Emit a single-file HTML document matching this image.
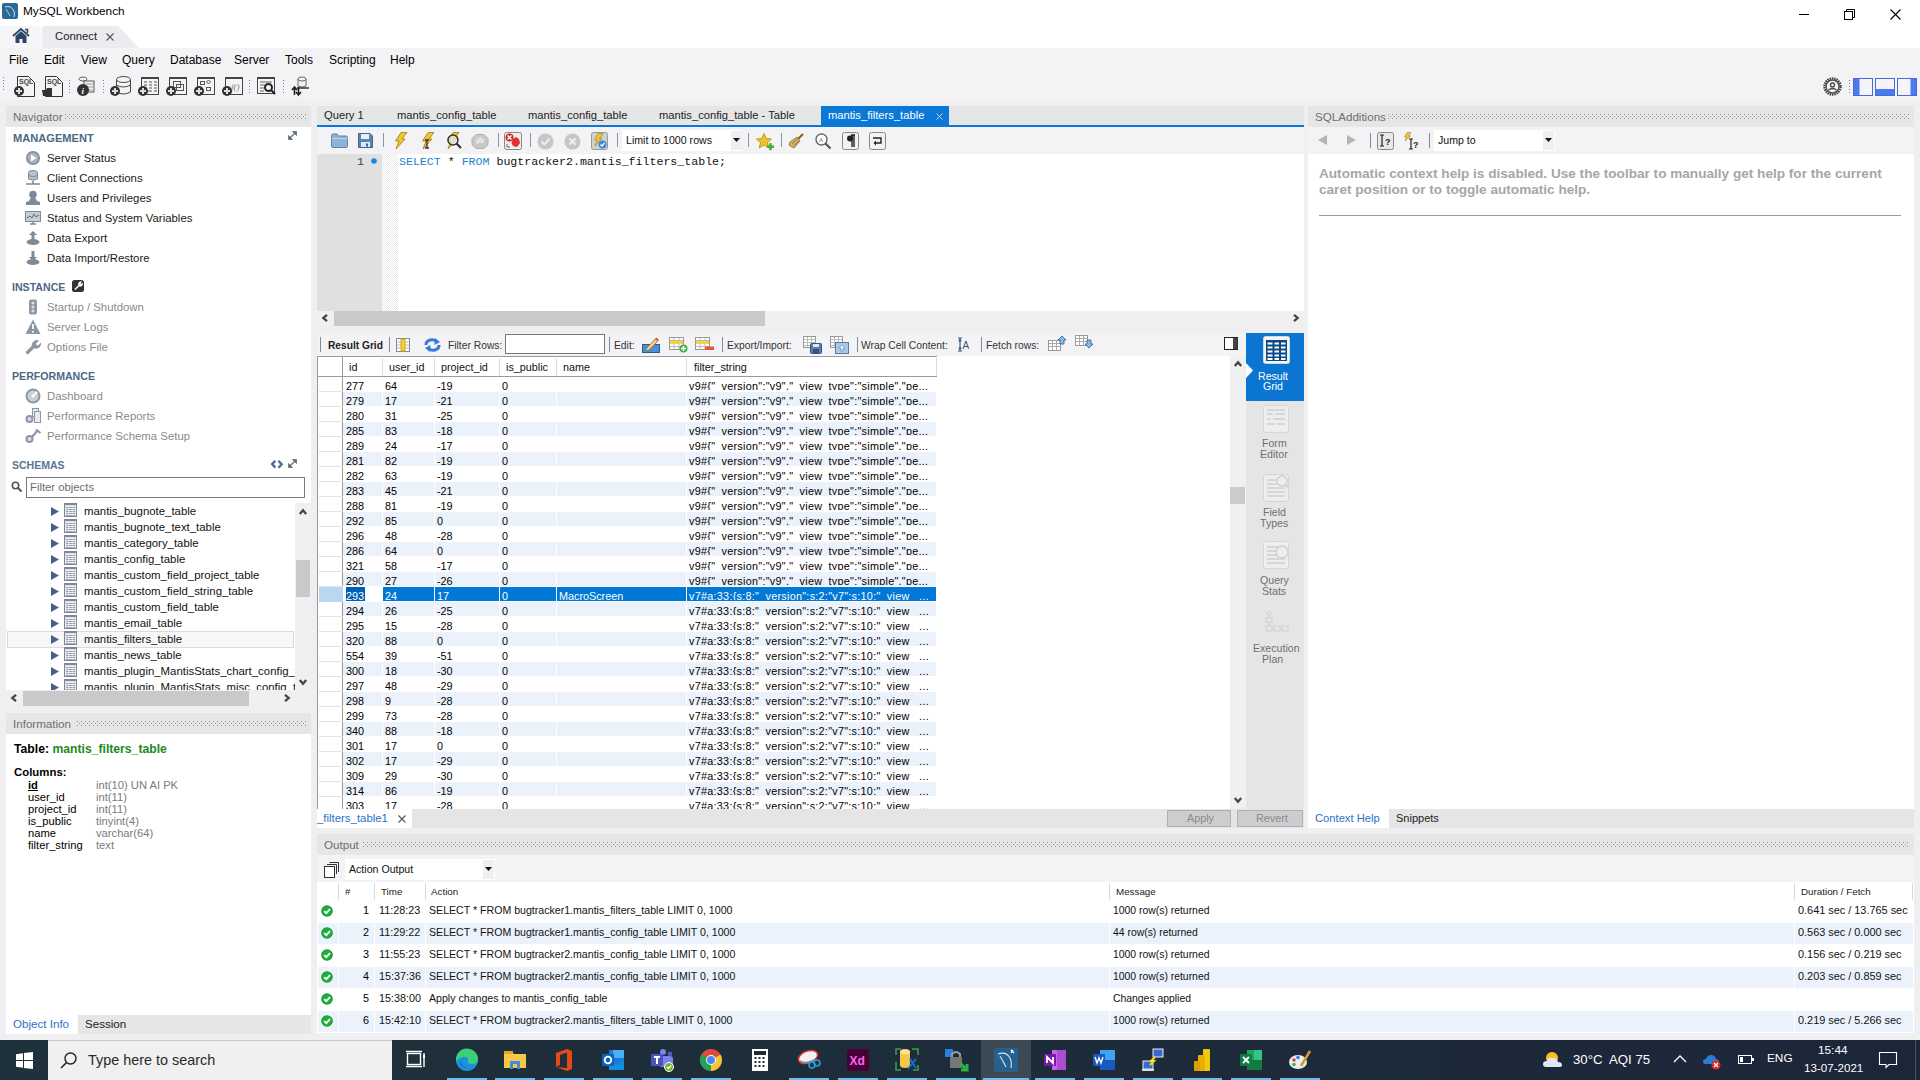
<!DOCTYPE html><html><head><meta charset="utf-8"><style>
*{margin:0;padding:0;box-sizing:border-box}
html,body{width:1920px;height:1080px;overflow:hidden;background:#efeff1;font-family:"Liberation Sans",sans-serif;color:#000;position:relative}
.a{position:absolute}
.t{position:absolute;white-space:nowrap;line-height:1}
.dots{position:absolute;background-image:radial-gradient(circle,#b8b8bc 0.8px,transparent 1px);background-size:4px 4px;}
svg{position:absolute;overflow:visible}
</style></head><body><svg width="0" height="0" style="position:absolute"><defs><pattern id="dp" width="4" height="4" patternUnits="userSpaceOnUse"><rect x="0" y="0" width="1" height="1" fill="#949494"/><rect x="2" y="2" width="1" height="1" fill="#949494"/></pattern><pattern id="hatch" width="2" height="2" patternUnits="userSpaceOnUse"><rect x="0" y="0" width="1" height="1" fill="#ebebeb"/><rect x="1" y="1" width="1" height="1" fill="#ebebeb"/></pattern></defs></svg>
<div class="a" style="left:0px;top:0px;width:1920px;height:25px;background:#fff"></div>
<svg style="left:2px;top:3px" width="16" height="16" viewBox="0 0 16 16"><rect x="0" y="0" width="16" height="16" rx="2" fill="#2a6a94"/><path d="M3 4 Q9 2 12 8 Q13 11 12 14" stroke="#cfe0ee" stroke-width="1" fill="none"/><path d="M4 6 Q6 9 8 13" stroke="#cfe0ee" stroke-width="0.8" fill="none"/></svg>
<div class="t" style="left:23px;top:6px;font-size:11.8px;color:#000;">MySQL Workbench</div>
<div class="a" style="left:1799px;top:14px;width:10px;height:1px;background:#000"></div>
<svg style="left:1844px;top:9px" width="11" height="11" viewBox="0 0 11 11"><rect x="0.5" y="2.5" width="8" height="8" fill="none" stroke="#000"/><path d="M2.5 2.5V0.5H10.5V8.5H8.5" fill="none" stroke="#000"/></svg>
<svg style="left:1890px;top:9px" width="11" height="11" viewBox="0 0 11 11"><path d="M0.5 0.5L10.5 10.5M10.5 0.5L0.5 10.5" stroke="#000" stroke-width="1.1"/></svg>
<div class="a" style="left:0px;top:25px;width:1920px;height:23px;background:#fff"></div>
<div class="a" style="left:0px;top:26px;width:41px;height:22px;background:#f6f6f8;border-top-right-radius:5px"></div>
<svg style="left:12px;top:28px" width="18" height="16" viewBox="0 0 18 16"><path d="M1 8L9 1L17 8" stroke="#2e4468" stroke-width="1.8" fill="none"/><path d="M3.5 8L9 3.3L14.5 8V15H10.5V11H7.5V15H3.5Z" fill="#2e4468"/><path d="M13 1.5H15.5V5" stroke="#2e4468" stroke-width="1.5" fill="none"/></svg>
<svg style="left:42px;top:26px" width="98" height="22" viewBox="0 0 98 22"><path d="M0 22 L0 3 Q0 0 3 0 L76 0 L97 22 Z" fill="#ececf0"/></svg>
<div class="t" style="left:55px;top:31px;font-size:11.3px;color:#222;">Connect</div>
<svg style="left:106px;top:33px" width="8" height="8" viewBox="0 0 8 8"><path d="M0.5 0.5L7.5 7.5M7.5 0.5L0.5 7.5" stroke="#555" stroke-width="1.1"/></svg>
<div class="a" style="left:0px;top:48px;width:1920px;height:52px;background:#f3f3f5"></div>
<div class="t" style="left:9px;top:54px;font-size:12px;color:#000;">File</div>
<div class="t" style="left:44px;top:54px;font-size:12px;color:#000;">Edit</div>
<div class="t" style="left:81px;top:54px;font-size:12px;color:#000;">View</div>
<div class="t" style="left:122px;top:54px;font-size:12px;color:#000;">Query</div>
<div class="t" style="left:170px;top:54px;font-size:12px;color:#000;">Database</div>
<div class="t" style="left:234px;top:54px;font-size:12px;color:#000;">Server</div>
<div class="t" style="left:285px;top:54px;font-size:12px;color:#000;">Tools</div>
<div class="t" style="left:329px;top:54px;font-size:12px;color:#000;">Scripting</div>
<div class="t" style="left:390px;top:54px;font-size:12px;color:#000;">Help</div>
<div class="a" style="left:3px;top:77px;width:1px;height:14px;background-image:linear-gradient(to bottom,#6a88b8 50%,transparent 50%);background-size:1px 3px"></div>
<svg style="left:14px;top:76px" width="21" height="21" viewBox="0 0 21 21"><path d="M3.5 0.5H14.5L20.5 6.5V20.5H3.5Z" fill="#f4f4f4" stroke="#333"/><text x="5" y="8" font-size="7" font-weight="bold" fill="#444" font-family="Liberation Sans">SQL</text><circle cx="5" cy="15" r="5" fill="#333"/><path d="M2 15H8M5 12V18" stroke="#ddd" stroke-width="2"/></svg>
<svg style="left:42px;top:76px" width="21" height="21" viewBox="0 0 21 21"><path d="M3.5 0.5H14.5L20.5 6.5V20.5H3.5Z" fill="#f4f4f4" stroke="#333"/><text x="5" y="8" font-size="7" font-weight="bold" fill="#444" font-family="Liberation Sans">SQL</text><path d="M0 14H4L5 12H10V20H1Z" fill="#333"/></svg>
<div class="a" style="left:69px;top:80px;width:1px;height:14px;background-image:linear-gradient(to bottom,#6a88b8 50%,transparent 50%);background-size:1px 3px"></div>
<svg style="left:77px;top:76px" width="18" height="21" viewBox="0 0 18 21"><ellipse cx="6" cy="3" rx="4" ry="2" fill="none" stroke="#666"/><rect x="7" y="5" width="10" height="11" fill="#f4f4f4" stroke="#555"/><path d="M9 8H16M9 11H16M9 14H16" stroke="#999"/><circle cx="6" cy="14" r="6" fill="#333"/><text x="4.5" y="18" font-size="9" font-style="italic" font-weight="bold" fill="#fff" font-family="Liberation Serif">i</text></svg>
<div class="a" style="left:103px;top:80px;width:1px;height:14px;background-image:linear-gradient(to bottom,#6a88b8 50%,transparent 50%);background-size:1px 3px"></div>
<svg style="left:110px;top:76px" width="21" height="21" viewBox="0 0 21 21"><path d="M6.5 3V16Q13 20 20.5 16V3" fill="#f4f4f4" stroke="#444"/><ellipse cx="13.5" cy="3.5" rx="7" ry="3" fill="#f4f4f4" stroke="#444"/><path d="M6.5 9Q13 13 20.5 9" fill="none" stroke="#444"/><circle cx="5" cy="15" r="5" fill="#333"/><path d="M2 15H8M5 12V18" stroke="#ddd" stroke-width="2"/></svg>
<svg style="left:138px;top:76px" width="21" height="21" viewBox="0 0 21 21"><rect x="3.5" y="1.5" width="17" height="17" fill="#f4f4f4" stroke="#444"/><rect x="3" y="1" width="18" height="2" fill="#444"/><path d="M6 6H9M11 6H14M16 6H19M6 9H9M11 9H14M16 9H19M6 12H9M11 12H14M16 12H19M9 15H14M16 15H19" stroke="#555" stroke-width="1"/><circle cx="5" cy="15" r="5" fill="#333"/><path d="M2 15H8M5 12V18" stroke="#ddd" stroke-width="2"/></svg>
<svg style="left:166px;top:76px" width="21" height="21" viewBox="0 0 21 21"><rect x="3.5" y="1.5" width="17" height="17" fill="#f4f4f4" stroke="#444"/><rect x="3" y="1" width="18" height="2" fill="#444"/><rect x="7.5" y="5.5" width="7" height="6" fill="none" stroke="#555"/><rect x="10.5" y="8.5" width="7" height="6" fill="none" stroke="#555"/><circle cx="5" cy="15" r="5" fill="#333"/><path d="M2 15H8M5 12V18" stroke="#ddd" stroke-width="2"/></svg>
<svg style="left:194px;top:76px" width="21" height="21" viewBox="0 0 21 21"><rect x="3.5" y="1.5" width="17" height="17" fill="#f4f4f4" stroke="#444"/><rect x="3" y="1" width="18" height="2" fill="#444"/><rect x="6.5" y="5.5" width="4" height="3" fill="none" stroke="#555"/><rect x="12.5" y="11.5" width="4" height="3" fill="none" stroke="#555"/><path d="M14.5 4L16.5 6L14.5 8L12.5 6Z" fill="none" stroke="#555"/><circle cx="5" cy="15" r="5" fill="#333"/><path d="M2 15H8M5 12V18" stroke="#ddd" stroke-width="2"/></svg>
<svg style="left:222px;top:76px" width="21" height="21" viewBox="0 0 21 21"><rect x="3.5" y="1.5" width="17" height="17" fill="#f4f4f4" stroke="#444"/><rect x="3" y="1" width="18" height="2" fill="#444"/><text x="9" y="14" font-size="9" fill="#777" font-family="Liberation Serif" font-style="italic">f()</text><circle cx="5" cy="15" r="5" fill="#333"/><path d="M2 15H8M5 12V18" stroke="#ddd" stroke-width="2"/></svg>
<div class="a" style="left:249px;top:80px;width:1px;height:14px;background-image:linear-gradient(to bottom,#6a88b8 50%,transparent 50%);background-size:1px 3px"></div>
<svg style="left:257px;top:76px" width="20" height="21" viewBox="0 0 20 21"><rect x="0.5" y="1.5" width="17" height="16" fill="#f4f4f4" stroke="#444"/><rect x="0" y="1" width="18" height="2" fill="#444"/><path d="M3 6H15M3 9H8M3 12H7M3 15H7" stroke="#666"/><circle cx="11.5" cy="11.5" r="3.5" fill="none" stroke="#222" stroke-width="2"/><path d="M14 14L18 18" stroke="#222" stroke-width="2"/></svg>
<div class="a" style="left:283px;top:80px;width:1px;height:14px;background-image:linear-gradient(to bottom,#6a88b8 50%,transparent 50%);background-size:1px 3px"></div>
<svg style="left:290px;top:76px" width="20" height="21" viewBox="0 0 20 21"><ellipse cx="12" cy="3" rx="4" ry="2" fill="#f4f4f4" stroke="#666"/><path d="M8 3V10Q12 12 16 10V3" fill="none" stroke="#666"/><path d="M7 12H19" stroke="#333" stroke-width="1.5"/><path d="M2 14L4.5 11L7 14M4.5 11V19M6 16L8.5 19L11 16M8.5 11V19" stroke="#222" stroke-width="1.6" fill="none"/></svg>
<svg style="left:1823px;top:77px" width="19" height="19" viewBox="0 0 19 19"><circle cx="9.5" cy="9.5" r="8" fill="none" stroke="#444" stroke-width="2.5" stroke-dasharray="1.5 0.8"/><circle cx="9.5" cy="9.5" r="6.5" fill="none" stroke="#555" stroke-width="1.5"/><circle cx="9.5" cy="8" r="2" fill="none" stroke="#444" stroke-width="1.3"/><path d="M5.5 13Q9.5 10 13.5 13" stroke="#444" stroke-width="1.3" fill="none"/></svg>
<div class="a" style="left:1849px;top:80px;width:1px;height:14px;background-image:linear-gradient(to bottom,#6a88b8 50%,transparent 50%);background-size:1px 3px"></div>
<svg style="left:1853px;top:78px" width="64" height="18" viewBox="0 0 64 18"><rect x="0.5" y="0.5" width="19" height="17" fill="#f4f4f8" stroke="#4a6ad8"/><rect x="1" y="1" width="5.5" height="16" fill="#4a7af0"/><rect x="22.5" y="0.5" width="19" height="17" fill="#f4f4f8" stroke="#4a6ad8"/><rect x="23" y="11" width="18" height="6" fill="#4a7af0"/><rect x="44.5" y="0.5" width="19" height="17" fill="#f4f4f8" stroke="#4a6ad8"/><rect x="57.5" y="1" width="5.5" height="16" fill="#4a7af0"/></svg>
<div class="a" style="left:6px;top:106px;width:305px;height:21px;background:#e6e6e7"></div>
<div class="t" style="left:13px;top:111px;font-size:11.6px;color:#6e6e6e;">Navigator</div>
<svg style="left:65px;top:114px" width="241" height="5" viewBox="0 0 241 5"><rect x="0" y="0" width="241" height="5" fill="url(#dp)"/></svg>
<div class="a" style="left:6px;top:127px;width:305px;height:563px;background:#fff"></div>
<div class="t" style="left:13px;top:133px;font-size:11.1px;color:#4e6786;font-weight:bold">MANAGEMENT</div>
<svg style="left:288px;top:131px" width="10" height="10" viewBox="0 0 10 10"><path d="M4.5 0.5H8.5V4.5Z M0.5 4.5V8.5H4.5Z" fill="#5e6e7e" stroke="#5e6e7e" stroke-width="0.8" stroke-linejoin="round"/><path d="M2 7L7 2" stroke="#5e6e7e" stroke-width="1.3"/></svg>
<svg style="left:25px;top:150px" width="16" height="16" viewBox="0 0 16 16"><circle cx="8" cy="8" r="7" fill="#7d8a98"/><circle cx="8" cy="8" r="5.5" fill="#a9b3bd"/><path d="M6 4.5L11.5 8L6 11.5Z" fill="#fff"/></svg>
<div class="t" style="left:47px;top:153px;font-size:11.4px;color:#1a1a1a;">Server Status</div>
<svg style="left:25px;top:170px" width="16" height="16" viewBox="0 0 16 16"><ellipse cx="8" cy="2.5" rx="4.5" ry="2" fill="#b9c2cb" stroke="#7d8a98"/><path d="M3.5 2.5V9Q8 11.5 12.5 9V2.5" fill="#b9c2cb" stroke="#7d8a98"/><path d="M3.5 5.5Q8 8 12.5 5.5" stroke="#7d8a98" fill="none"/><path d="M8 11V14M1 14H15" stroke="#7d8a98" stroke-width="1.5"/></svg>
<div class="t" style="left:47px;top:173px;font-size:11.4px;color:#1a1a1a;">Client Connections</div>
<svg style="left:25px;top:190px" width="16" height="16" viewBox="0 0 16 16"><circle cx="8" cy="4.5" r="3.8" fill="#7d8a98"/><path d="M5.5 8L4 11L1 12V15H15V12L12 11L10.5 8Z" fill="#7d8a98"/></svg>
<div class="t" style="left:47px;top:193px;font-size:11.4px;color:#1a1a1a;">Users and Privileges</div>
<svg style="left:25px;top:210px" width="16" height="16" viewBox="0 0 16 16"><rect x="0.5" y="1.5" width="15" height="10" fill="#c6ced6" stroke="#7d8a98"/><path d="M2 8L5 6L7 8L9 4L11 7L14 5" stroke="#5a6a7a" fill="none"/><path d="M5 14H11M8 12V14" stroke="#7d8a98" stroke-width="1.5"/></svg>
<div class="t" style="left:47px;top:213px;font-size:11.4px;color:#1a1a1a;">Status and System Variables</div>
<svg style="left:25px;top:230px" width="16" height="16" viewBox="0 0 16 16"><ellipse cx="8" cy="12" rx="6.5" ry="3" fill="#7d8a98"/><path d="M8 1L4 5H6.5V10H9.5V5H12Z" fill="#7d8a98"/></svg>
<div class="t" style="left:47px;top:233px;font-size:11.4px;color:#1a1a1a;">Data Export</div>
<svg style="left:25px;top:250px" width="16" height="16" viewBox="0 0 16 16"><ellipse cx="8" cy="12" rx="6.5" ry="3" fill="#7d8a98"/><path d="M8 11L4 7H6.5V1H9.5V7H12Z" fill="#7d8a98"/></svg>
<div class="t" style="left:47px;top:253px;font-size:11.4px;color:#1a1a1a;">Data Import/Restore</div>
<div class="t" style="left:12px;top:282px;font-size:10.6px;color:#4e6786;font-weight:bold">INSTANCE</div>
<svg style="left:72px;top:280px" width="12" height="12" viewBox="0 0 12 12"><rect x="0" y="0" width="12" height="12" rx="2.5" fill="#333"/><path d="M3 9.5L7 5.5M7 5.5Q6.5 3 8.5 2.3L7.8 3.8L8.8 4.8L10.2 4Q10 6.3 7 5.5" stroke="#fff" stroke-width="1.5" fill="#fff"/></svg>
<svg style="left:25px;top:299px" width="16" height="16" viewBox="0 0 16 16"><rect x="4" y="0.5" width="8" height="15" rx="2" fill="#8c97a3"/><circle cx="8" cy="4" r="1.6" fill="#d8dde2"/><circle cx="8" cy="8" r="1.6" fill="#d8dde2"/><circle cx="8" cy="12" r="1.6" fill="#d8dde2"/></svg>
<div class="t" style="left:47px;top:302px;font-size:11.4px;color:#8a8a8a;">Startup / Shutdown</div>
<svg style="left:25px;top:319px" width="16" height="16" viewBox="0 0 16 16"><path d="M8 0.5L15.5 15H0.5Z" fill="#8c97a3"/><path d="M8 5V10M8 12V13.5" stroke="#fff" stroke-width="1.8"/></svg>
<div class="t" style="left:47px;top:322px;font-size:11.4px;color:#8a8a8a;">Server Logs</div>
<svg style="left:25px;top:339px" width="16" height="16" viewBox="0 0 16 16"><path d="M2.5 13.5L8.5 7.5" stroke="#8c97a3" stroke-width="3.2" stroke-linecap="round"/><path d="M7 8Q6 4 9 2Q11.5 0.5 14 1.5L11 4.5L11.5 6L13 6.5L16 3.5Q16.5 6.5 14.5 8.5Q12 10.5 8.5 9Z" fill="#8c97a3"/></svg>
<div class="t" style="left:47px;top:342px;font-size:11.4px;color:#8a8a8a;">Options File</div>
<div class="t" style="left:12px;top:371px;font-size:10.6px;color:#4e6786;font-weight:bold">PERFORMANCE</div>
<svg style="left:25px;top:388px" width="16" height="16" viewBox="0 0 16 16"><circle cx="8" cy="8" r="7.5" fill="#8c97a3"/><circle cx="8" cy="8" r="5.5" fill="#c9d0d6"/><path d="M8 8L12 4" stroke="#fff" stroke-width="2"/><circle cx="8" cy="8" r="1.5" fill="#fff"/></svg>
<div class="t" style="left:47px;top:391px;font-size:11.4px;color:#8a8a8a;">Dashboard</div>
<svg style="left:25px;top:408px" width="16" height="16" viewBox="0 0 16 16"><rect x="7.5" y="0.5" width="6" height="8" fill="#e8ebee" stroke="#8c97a3"/><rect x="9.5" y="3.5" width="6" height="11" fill="#e8ebee" stroke="#8c97a3"/><circle cx="4.5" cy="11" r="4" fill="#8c97a3"/><circle cx="4.5" cy="11" r="2" fill="#dde"/></svg>
<div class="t" style="left:47px;top:411px;font-size:11.4px;color:#8a8a8a;">Performance Reports</div>
<svg style="left:25px;top:428px" width="16" height="16" viewBox="0 0 16 16"><path d="M7 9L13 2M11 1.5L15.5 5" stroke="#8c97a3" stroke-width="2.2"/><circle cx="4.5" cy="11" r="4" fill="#8c97a3"/><circle cx="4.5" cy="11" r="2" fill="#dde"/></svg>
<div class="t" style="left:47px;top:431px;font-size:11.4px;color:#8a8a8a;">Performance Schema Setup</div>
<div class="t" style="left:12px;top:460px;font-size:10.5px;color:#5b7592;font-weight:bold">SCHEMAS</div>
<svg style="left:271px;top:460px" width="12" height="9" viewBox="0 0 12 9"><path d="M4.3 0.8L1.2 4L4.3 7.6" stroke="#4d6c92" stroke-width="2.4" fill="none"/><path d="M7.4 0.8L10.6 4.2L7.6 7.8" stroke="#4d6c92" stroke-width="2.4" fill="none"/></svg>
<svg style="left:288px;top:459px" width="10" height="10" viewBox="0 0 10 10"><path d="M4.5 0.5H8.5V4.5Z M0.5 4.5V8.5H4.5Z" fill="#5e6e7e" stroke="#5e6e7e" stroke-width="0.8" stroke-linejoin="round"/><path d="M2 7L7 2" stroke="#5e6e7e" stroke-width="1.3"/></svg>
<svg style="left:11px;top:481px" width="12" height="12" viewBox="0 0 12 12"><circle cx="4.5" cy="4.5" r="3.2" fill="none" stroke="#555" stroke-width="1.6"/><path d="M7 7L10.5 10.5" stroke="#555" stroke-width="2"/></svg>
<div class="a" style="left:26px;top:477px;width:279px;height:21px;background:#fff;border:1px solid #7a7a7a"></div>
<div class="t" style="left:30px;top:482px;font-size:11.3px;color:#6d6d6d;">Filter objects</div>
<div class="a" style="left:6px;top:503px;width:289px;height:187px;overflow:hidden">
<div class="a" style="left:1px;top:128px;width:287px;height:17px;background:#f7f7f7;border:1px solid #dadada"></div>
<svg style="left:45px;top:4px" width="8" height="9" viewBox="0 0 8 9"><path d="M0 0L8 4.5L0 9Z" fill="#44618a"/></svg>
<svg style="left:58px;top:0px" width="13" height="14" viewBox="0 0 13 14"><rect x="0.5" y="0.5" width="12" height="13" fill="#e6e9ed" stroke="#7c8694"/><rect x="0" y="0" width="13" height="2" fill="#7c8694"/><path d="M2 4.5H11M2 6.5H11M2 8.5H11M2 10.5H11M2 12.5H11" stroke="#8e97a2" stroke-width="0.9" stroke-dasharray="2.5 0.8"/></svg>
<div class="t" style="left:78px;top:3px;font-size:11.4px;color:#111;">mantis_bugnote_table</div>
<svg style="left:45px;top:20px" width="8" height="9" viewBox="0 0 8 9"><path d="M0 0L8 4.5L0 9Z" fill="#44618a"/></svg>
<svg style="left:58px;top:16px" width="13" height="14" viewBox="0 0 13 14"><rect x="0.5" y="0.5" width="12" height="13" fill="#e6e9ed" stroke="#7c8694"/><rect x="0" y="0" width="13" height="2" fill="#7c8694"/><path d="M2 4.5H11M2 6.5H11M2 8.5H11M2 10.5H11M2 12.5H11" stroke="#8e97a2" stroke-width="0.9" stroke-dasharray="2.5 0.8"/></svg>
<div class="t" style="left:78px;top:19px;font-size:11.4px;color:#111;">mantis_bugnote_text_table</div>
<svg style="left:45px;top:36px" width="8" height="9" viewBox="0 0 8 9"><path d="M0 0L8 4.5L0 9Z" fill="#44618a"/></svg>
<svg style="left:58px;top:32px" width="13" height="14" viewBox="0 0 13 14"><rect x="0.5" y="0.5" width="12" height="13" fill="#e6e9ed" stroke="#7c8694"/><rect x="0" y="0" width="13" height="2" fill="#7c8694"/><path d="M2 4.5H11M2 6.5H11M2 8.5H11M2 10.5H11M2 12.5H11" stroke="#8e97a2" stroke-width="0.9" stroke-dasharray="2.5 0.8"/></svg>
<div class="t" style="left:78px;top:35px;font-size:11.4px;color:#111;">mantis_category_table</div>
<svg style="left:45px;top:52px" width="8" height="9" viewBox="0 0 8 9"><path d="M0 0L8 4.5L0 9Z" fill="#44618a"/></svg>
<svg style="left:58px;top:48px" width="13" height="14" viewBox="0 0 13 14"><rect x="0.5" y="0.5" width="12" height="13" fill="#e6e9ed" stroke="#7c8694"/><rect x="0" y="0" width="13" height="2" fill="#7c8694"/><path d="M2 4.5H11M2 6.5H11M2 8.5H11M2 10.5H11M2 12.5H11" stroke="#8e97a2" stroke-width="0.9" stroke-dasharray="2.5 0.8"/></svg>
<div class="t" style="left:78px;top:51px;font-size:11.4px;color:#111;">mantis_config_table</div>
<svg style="left:45px;top:68px" width="8" height="9" viewBox="0 0 8 9"><path d="M0 0L8 4.5L0 9Z" fill="#44618a"/></svg>
<svg style="left:58px;top:64px" width="13" height="14" viewBox="0 0 13 14"><rect x="0.5" y="0.5" width="12" height="13" fill="#e6e9ed" stroke="#7c8694"/><rect x="0" y="0" width="13" height="2" fill="#7c8694"/><path d="M2 4.5H11M2 6.5H11M2 8.5H11M2 10.5H11M2 12.5H11" stroke="#8e97a2" stroke-width="0.9" stroke-dasharray="2.5 0.8"/></svg>
<div class="t" style="left:78px;top:67px;font-size:11.4px;color:#111;">mantis_custom_field_project_table</div>
<svg style="left:45px;top:84px" width="8" height="9" viewBox="0 0 8 9"><path d="M0 0L8 4.5L0 9Z" fill="#44618a"/></svg>
<svg style="left:58px;top:80px" width="13" height="14" viewBox="0 0 13 14"><rect x="0.5" y="0.5" width="12" height="13" fill="#e6e9ed" stroke="#7c8694"/><rect x="0" y="0" width="13" height="2" fill="#7c8694"/><path d="M2 4.5H11M2 6.5H11M2 8.5H11M2 10.5H11M2 12.5H11" stroke="#8e97a2" stroke-width="0.9" stroke-dasharray="2.5 0.8"/></svg>
<div class="t" style="left:78px;top:83px;font-size:11.4px;color:#111;">mantis_custom_field_string_table</div>
<svg style="left:45px;top:100px" width="8" height="9" viewBox="0 0 8 9"><path d="M0 0L8 4.5L0 9Z" fill="#44618a"/></svg>
<svg style="left:58px;top:96px" width="13" height="14" viewBox="0 0 13 14"><rect x="0.5" y="0.5" width="12" height="13" fill="#e6e9ed" stroke="#7c8694"/><rect x="0" y="0" width="13" height="2" fill="#7c8694"/><path d="M2 4.5H11M2 6.5H11M2 8.5H11M2 10.5H11M2 12.5H11" stroke="#8e97a2" stroke-width="0.9" stroke-dasharray="2.5 0.8"/></svg>
<div class="t" style="left:78px;top:99px;font-size:11.4px;color:#111;">mantis_custom_field_table</div>
<svg style="left:45px;top:116px" width="8" height="9" viewBox="0 0 8 9"><path d="M0 0L8 4.5L0 9Z" fill="#44618a"/></svg>
<svg style="left:58px;top:112px" width="13" height="14" viewBox="0 0 13 14"><rect x="0.5" y="0.5" width="12" height="13" fill="#e6e9ed" stroke="#7c8694"/><rect x="0" y="0" width="13" height="2" fill="#7c8694"/><path d="M2 4.5H11M2 6.5H11M2 8.5H11M2 10.5H11M2 12.5H11" stroke="#8e97a2" stroke-width="0.9" stroke-dasharray="2.5 0.8"/></svg>
<div class="t" style="left:78px;top:115px;font-size:11.4px;color:#111;">mantis_email_table</div>
<svg style="left:45px;top:132px" width="8" height="9" viewBox="0 0 8 9"><path d="M0 0L8 4.5L0 9Z" fill="#44618a"/></svg>
<svg style="left:58px;top:128px" width="13" height="14" viewBox="0 0 13 14"><rect x="0.5" y="0.5" width="12" height="13" fill="#e6e9ed" stroke="#7c8694"/><rect x="0" y="0" width="13" height="2" fill="#7c8694"/><path d="M2 4.5H11M2 6.5H11M2 8.5H11M2 10.5H11M2 12.5H11" stroke="#8e97a2" stroke-width="0.9" stroke-dasharray="2.5 0.8"/></svg>
<div class="t" style="left:78px;top:131px;font-size:11.4px;color:#111;">mantis_filters_table</div>
<svg style="left:45px;top:148px" width="8" height="9" viewBox="0 0 8 9"><path d="M0 0L8 4.5L0 9Z" fill="#44618a"/></svg>
<svg style="left:58px;top:144px" width="13" height="14" viewBox="0 0 13 14"><rect x="0.5" y="0.5" width="12" height="13" fill="#e6e9ed" stroke="#7c8694"/><rect x="0" y="0" width="13" height="2" fill="#7c8694"/><path d="M2 4.5H11M2 6.5H11M2 8.5H11M2 10.5H11M2 12.5H11" stroke="#8e97a2" stroke-width="0.9" stroke-dasharray="2.5 0.8"/></svg>
<div class="t" style="left:78px;top:147px;font-size:11.4px;color:#111;">mantis_news_table</div>
<svg style="left:45px;top:164px" width="8" height="9" viewBox="0 0 8 9"><path d="M0 0L8 4.5L0 9Z" fill="#44618a"/></svg>
<svg style="left:58px;top:160px" width="13" height="14" viewBox="0 0 13 14"><rect x="0.5" y="0.5" width="12" height="13" fill="#e6e9ed" stroke="#7c8694"/><rect x="0" y="0" width="13" height="2" fill="#7c8694"/><path d="M2 4.5H11M2 6.5H11M2 8.5H11M2 10.5H11M2 12.5H11" stroke="#8e97a2" stroke-width="0.9" stroke-dasharray="2.5 0.8"/></svg>
<div class="t" style="left:78px;top:163px;font-size:11.4px;color:#111;">mantis_plugin_MantisStats_chart_config_table</div>
<svg style="left:45px;top:180px" width="8" height="9" viewBox="0 0 8 9"><path d="M0 0L8 4.5L0 9Z" fill="#44618a"/></svg>
<svg style="left:58px;top:176px" width="13" height="14" viewBox="0 0 13 14"><rect x="0.5" y="0.5" width="12" height="13" fill="#e6e9ed" stroke="#7c8694"/><rect x="0" y="0" width="13" height="2" fill="#7c8694"/><path d="M2 4.5H11M2 6.5H11M2 8.5H11M2 10.5H11M2 12.5H11" stroke="#8e97a2" stroke-width="0.9" stroke-dasharray="2.5 0.8"/></svg>
<div class="t" style="left:78px;top:179px;font-size:11.4px;color:#111;">mantis_plugin_MantisStats_misc_config_table</div>
</div>
<div class="a" style="left:295px;top:503px;width:16px;height:187px;background:#f0f0f0"></div>
<div class="a" style="left:296px;top:560px;width:14px;height:37px;background:#c9c9c9"></div>
<svg style="left:299px;top:509px" width="8" height="6" viewBox="0 0 8 6"><path d="M0.8 5L4 1.3L7.2 5" stroke="#444" stroke-width="2.3" fill="none"/></svg>
<svg style="left:299px;top:679px" width="8" height="6" viewBox="0 0 8 6"><path d="M0.8 1L4 4.7L7.2 1" stroke="#444" stroke-width="2.3" fill="none"/></svg>
<div class="a" style="left:6px;top:690px;width:305px;height:16px;background:#f0f0f0"></div>
<div class="a" style="left:23px;top:691px;width:226px;height:15px;background:#c9c9c9"></div>
<svg style="left:11px;top:694px" width="6" height="8" viewBox="0 0 6 8"><path d="M5 0.8L1.3 4L5 7.2" stroke="#444" stroke-width="2.3" fill="none"/></svg>
<svg style="left:284px;top:694px" width="6" height="8" viewBox="0 0 6 8"><path d="M1 0.8L4.7 4L1 7.2" stroke="#444" stroke-width="2.3" fill="none"/></svg>
<div class="a" style="left:6px;top:713px;width:305px;height:21px;background:#e6e6e7"></div>
<div class="t" style="left:13px;top:718px;font-size:11.6px;color:#6e6e6e;">Information</div>
<svg style="left:77px;top:721px" width="229" height="5" viewBox="0 0 229 5"><rect x="0" y="0" width="229" height="5" fill="url(#dp)"/></svg>
<div class="a" style="left:6px;top:734px;width:305px;height:281px;background:#fff"></div>
<div class="t" style="left:14px;top:743px;font-size:12.2px;color:#000;font-weight:bold">Table: <span style="color:#1e8a1e">mantis_filters_table</span></div>
<div class="t" style="left:14px;top:767px;font-size:11.4px;color:#000;font-weight:bold">Columns:</div>
<div class="t" style="left:28px;top:780px;font-size:11.2px;color:#000;font-weight:bold;text-decoration:underline">id</div>
<div class="t" style="left:96px;top:780px;font-size:11.2px;color:#7a7a7a;">int(10) UN AI PK</div>
<div class="t" style="left:28px;top:792px;font-size:11.2px;color:#000;">user_id</div>
<div class="t" style="left:96px;top:792px;font-size:11.2px;color:#7a7a7a;">int(11)</div>
<div class="t" style="left:28px;top:804px;font-size:11.2px;color:#000;">project_id</div>
<div class="t" style="left:96px;top:804px;font-size:11.2px;color:#7a7a7a;">int(11)</div>
<div class="t" style="left:28px;top:816px;font-size:11.2px;color:#000;">is_public</div>
<div class="t" style="left:96px;top:816px;font-size:11.2px;color:#7a7a7a;">tinyint(4)</div>
<div class="t" style="left:28px;top:828px;font-size:11.2px;color:#000;">name</div>
<div class="t" style="left:96px;top:828px;font-size:11.2px;color:#7a7a7a;">varchar(64)</div>
<div class="t" style="left:28px;top:840px;font-size:11.2px;color:#000;">filter_string</div>
<div class="t" style="left:96px;top:840px;font-size:11.2px;color:#7a7a7a;">text</div>
<div class="a" style="left:6px;top:1015px;width:72px;height:19px;background:#fff"></div>
<div class="a" style="left:78px;top:1015px;width:233px;height:19px;background:#e6e6e6"></div>
<div class="t" style="left:13px;top:1018px;font-size:11.6px;color:#2a72c8;">Object Info</div>
<div class="t" style="left:85px;top:1018px;font-size:11.6px;color:#222;">Session</div>
<div class="a" style="left:317px;top:106px;width:987px;height:19px;background:#e6e6e7"></div>
<div class="t" style="left:324px;top:109.5px;font-size:11.2px;color:#222;">Query 1</div>
<div class="t" style="left:397px;top:109.5px;font-size:11.2px;color:#222;">mantis_config_table</div>
<div class="t" style="left:528px;top:109.5px;font-size:11.2px;color:#222;">mantis_config_table</div>
<div class="t" style="left:659px;top:109.5px;font-size:11.2px;color:#222;">mantis_config_table - Table</div>
<div class="a" style="left:821px;top:106px;width:128px;height:19px;background:#0a78d4"></div>
<div class="t" style="left:828px;top:109.5px;font-size:11.2px;color:#fff;">mantis_filters_table</div>
<svg style="left:936px;top:113px" width="7" height="7" viewBox="0 0 7 7"><path d="M0.5 0.5L6.5 6.5M6.5 0.5L0.5 6.5" stroke="#d8e8f8" stroke-width="0.9"/></svg>
<div class="a" style="left:317px;top:125px;width:987px;height:2px;background:#0a78d4"></div>
<div class="a" style="left:317px;top:127px;width:987px;height:27px;background:#f3f3f5"></div>
<svg style="left:331px;top:133px" width="17" height="15" viewBox="0 0 17 15"><path d="M0.5 2.5Q0.5 1 2 1H6L7.5 3H15Q16.5 3 16.5 4.5V13.5Q16.5 14.5 15 14.5H2Q0.5 14.5 0.5 13Z" fill="#8fb3d6" stroke="#5d84ad"/><path d="M0.5 5.5H16.5" stroke="#b9d2ea"/></svg>
<svg style="left:358px;top:133px" width="15" height="15" viewBox="0 0 15 15"><path d="M0.5 0.5H12L14.5 3V14.5H0.5Z" fill="#5a86b2" stroke="#3d6690"/><rect x="3" y="1" width="8" height="5" fill="#e8eff6"/><rect x="3" y="9" width="9" height="5" fill="#dfe8f1"/><rect x="8" y="10.5" width="2" height="3" fill="#3d6690"/></svg>
<div class="a" style="left:383px;top:133px;width:1px;height:14px;background:#8797ad"></div>
<svg style="left:392px;top:132px" width="16" height="18" viewBox="0 0 16 18"><path d="M9 0.5H15L10 7H13L4 17L7 9H3.5Z" fill="#f4c430" stroke="#9a7a10" stroke-width="0.8"/></svg>
<svg style="left:419px;top:132px" width="16" height="18" viewBox="0 0 16 18"><path d="M9 0.5H15L10 7H13L4 17L7 9H3.5Z" fill="#f4c430" stroke="#9a7a10" stroke-width="0.8"/><path d="M6 8H10M8 8V16M6 16H10" stroke="#333" stroke-width="1.3"/></svg>
<svg style="left:444px;top:132px" width="19" height="19" viewBox="0 0 19 19"><path d="M9 0.5H15L10 7H13L4 17L7 9H3.5Z" fill="#f4c430" stroke="#9a7a10" stroke-width="0.8"/><circle cx="9" cy="8" r="5" fill="#e4eefa" fill-opacity="0.7" stroke="#333" stroke-width="1.5"/><path d="M12.5 11.5L17 16" stroke="#333" stroke-width="2.2"/></svg>
<svg style="left:471px;top:133px" width="18" height="17" viewBox="0 0 18 17"><path d="M5 1.5H13L17 5.5V11.5L13 15.5H5L1 11.5V5.5Z" fill="#c8c8c8" stroke="#b0b0b0"/><path d="M6 11V6M8 10V4.5M10 10V4.5M12 10V6" stroke="#eee" stroke-width="1.3"/></svg>
<div class="a" style="left:498px;top:133px;width:1px;height:14px;background:#8797ad"></div>
<svg style="left:504px;top:132px" width="18" height="18" viewBox="0 0 18 18"><rect x="0.5" y="0.5" width="17" height="17" rx="2" fill="#eee" stroke="#888"/><circle cx="5.5" cy="5.5" r="4" fill="#d9262a"/><path d="M3.5 3.5L7.5 7.5M7.5 3.5L3.5 7.5" stroke="#fff" stroke-width="1.4"/><path d="M9 7L12 5L15 7L16 11L13 15L9 14L7.5 11Z" fill="#e03030"/><path d="M3 12V15H6" stroke="#666" fill="none"/></svg>
<div class="a" style="left:530px;top:133px;width:1px;height:14px;background:#8797ad"></div>
<svg style="left:537px;top:133px" width="17" height="17" viewBox="0 0 17 17"><circle cx="8.5" cy="8.5" r="8" fill="#c6c6c6"/><path d="M4.5 8.5L7.5 11.5L12.5 5.5" stroke="#eee" stroke-width="2" fill="none"/></svg>
<svg style="left:564px;top:133px" width="17" height="17" viewBox="0 0 17 17"><circle cx="8.5" cy="8.5" r="8" fill="#c6c6c6"/><path d="M5.5 5.5L11.5 11.5M11.5 5.5L5.5 11.5" stroke="#eee" stroke-width="2"/></svg>
<svg style="left:591px;top:132px" width="17" height="18" viewBox="0 0 17 18"><rect x="0.5" y="0.5" width="16" height="17" rx="2" fill="#d0d0d0" stroke="#999"/><path d="M7 1.5H12L8.5 6.5H11L4 14L6.5 8H3.5Z" fill="#f4c430" stroke="#9a7a10" stroke-width="0.6"/><circle cx="11.5" cy="12.5" r="4" fill="#3c8ae0"/><path d="M9.5 12.5L11 14L13.5 11" stroke="#fff" stroke-width="1.2" fill="none"/></svg>
<div class="a" style="left:617px;top:133px;width:1px;height:14px;background:#8797ad"></div>
<div class="a" style="left:622px;top:130px;width:120px;height:21px;background:#fff"></div>
<div class="a" style="left:731px;top:131px;width:11px;height:19px;background:#efeff1"></div>
<svg style="left:733px;top:138px" width="7" height="4" viewBox="0 0 7 4"><path d="M0 0H7L3.5 4Z" fill="#111"/></svg>
<div class="t" style="left:626px;top:135px;font-size:10.6px;color:#111;">Limit to 1000 rows</div>
<div class="a" style="left:748px;top:133px;width:1px;height:14px;background:#8797ad"></div>
<svg style="left:756px;top:133px" width="18" height="18" viewBox="0 0 18 18"><path d="M8 0.5L10.3 5.5L15.5 6L11.5 9.5L12.8 15L8 12L3.2 15L4.5 9.5L0.5 6L5.7 5.5Z" fill="#f2c12e" stroke="#b48a10" stroke-width="0.8"/><rect x="11" y="12.5" width="7" height="2.5" fill="#3bb03b"/><rect x="13.2" y="10.2" width="2.5" height="7" fill="#3bb03b"/></svg>
<div class="a" style="left:781px;top:133px;width:1px;height:14px;background:#8797ad"></div>
<svg style="left:788px;top:133px" width="18" height="17" viewBox="0 0 18 17"><path d="M15 1L10 6" stroke="#8a5a20" stroke-width="2"/><path d="M2 9L9 4L12 8L6 15Q3 14 1 12Z" fill="#d6b060" stroke="#8a6a30" stroke-width="0.8"/><path d="M4 11L9 6M6 13L10.5 8" stroke="#8a6a30" stroke-width="0.7"/></svg>
<svg style="left:815px;top:133px" width="17" height="17" viewBox="0 0 17 17"><circle cx="6.5" cy="6.5" r="5.5" fill="#fff" stroke="#666" stroke-width="1.4"/><text x="4" y="9" font-size="6" fill="#777" font-family="Liberation Sans">A</text><path d="M10.5 10.5L15.5 15.5" stroke="#555" stroke-width="2.2"/></svg>
<svg style="left:842px;top:132px" width="17" height="18" viewBox="0 0 17 18"><rect x="0.5" y="0.5" width="16" height="17" rx="2" fill="#f2f2f2" stroke="#8a8a8a"/><path d="M9 3H13M10 3V15M12 3V15" stroke="#222" stroke-width="1.4"/><circle cx="8" cy="6.5" r="3" fill="#222"/></svg>
<svg style="left:869px;top:132px" width="17" height="18" viewBox="0 0 17 18"><rect x="0.5" y="0.5" width="16" height="17" rx="2" fill="#f2f2f2" stroke="#8a8a8a"/><path d="M4 6H12V11H6" stroke="#222" stroke-width="1.4" fill="none"/><path d="M7 8.5L4.5 11L7 13.5Z" fill="#222"/></svg>
<div class="a" style="left:317px;top:154px;width:987px;height:157px;background:#fff"></div>
<div class="a" style="left:317px;top:154px;width:65px;height:157px;background:#e0e0e0"></div>
<svg style="left:382px;top:154px" width="16" height="157" viewBox="0 0 16 157"><rect width="16" height="157" fill="url(#hatch)"/></svg>
<div class="t" style="left:357px;top:156px;font-size:11.6px;color:#444;font-family:Liberation Mono,monospace">1</div>
<svg style="left:371px;top:158px" width="6" height="6" viewBox="0 0 6 6"><circle cx="3" cy="3" r="2.8" fill="#1a88e0"/></svg>
<div class="t" style="left:399px;top:156px;font-size:11.6px;color:#111;font-family:Liberation Mono,monospace"><span style="color:#1c86d0">SELECT</span> * <span style="color:#1c86d0">FROM</span> bugtracker2.mantis_filters_table;</div>
<div class="a" style="left:317px;top:311px;width:987px;height:15px;background:#f0f0f0"></div>
<div class="a" style="left:334px;top:311px;width:431px;height:15px;background:#c9c9c9"></div>
<svg style="left:322px;top:314px" width="6" height="8" viewBox="0 0 6 8"><path d="M5 0.8L1.3 4L5 7.2" stroke="#444" stroke-width="2.3" fill="none"/></svg>
<svg style="left:1293px;top:314px" width="6" height="8" viewBox="0 0 6 8"><path d="M1 0.8L4.7 4L1 7.2" stroke="#444" stroke-width="2.3" fill="none"/></svg>
<div class="a" style="left:317px;top:333px;width:929px;height:23px;background:#f3f3f5"></div>
<div class="a" style="left:320px;top:337px;width:1px;height:15px;background:#7a8aa0"></div>
<div class="t" style="left:328px;top:341px;font-size:10.2px;color:#222;font-weight:bold">Result Grid</div>
<div class="a" style="left:389px;top:337px;width:1px;height:15px;background:#7a8aa0"></div>
<svg style="left:396px;top:338px" width="14" height="14" viewBox="0 0 14 14"><rect x="0.5" y="0.5" width="13" height="13" fill="#fff" stroke="#8a8a8a"/><path d="M1 4H13M1 7H13M1 10H13" stroke="#bbb"/><rect x="5" y="1" width="4" height="12" fill="#f5d43a" stroke="#c09a10" stroke-width="0.8"/></svg>
<svg style="left:424px;top:337px" width="17" height="16" viewBox="0 0 17 16"><path d="M2 8A6 5 0 0 1 13 5" stroke="#3a7ad8" stroke-width="3" fill="none"/><path d="M11 1L16 5L10.5 8Z" fill="#3a7ad8"/><path d="M15 8A6 5 0 0 1 4 11" stroke="#3a7ad8" stroke-width="3" fill="none"/><path d="M6 15L1 11L6.5 8Z" fill="#3a7ad8"/></svg>
<div class="t" style="left:448px;top:341px;font-size:10.3px;color:#333;">Filter Rows:</div>
<div class="a" style="left:505px;top:334px;width:100px;height:20px;background:#fff;border:1px solid #777"></div>
<div class="a" style="left:609px;top:337px;width:1px;height:15px;background:#7a8aa0"></div>
<div class="t" style="left:614px;top:341px;font-size:10.3px;color:#333;">Edit:</div>
<svg style="left:642px;top:336px" width="19" height="17" viewBox="0 0 19 17"><rect x="0.5" y="8.5" width="17" height="8" fill="#4a90d8" stroke="#2a5a98"/><path d="M4 13L13 3L16 5L7 14L3.5 14.5Z" fill="#f4d080" stroke="#a06a20" stroke-width="0.8"/><path d="M13 3L14.5 1.5L17 4L16 5Z" fill="#e05050"/></svg>
<svg style="left:669px;top:337px" width="19" height="16" viewBox="0 0 19 16"><rect x="0.5" y="0.5" width="14" height="12" fill="#fff" stroke="#999"/><path d="M1 3.5H14M1 6.5H14M1 9.5H14M5 1V12M10 1V12" stroke="#bbb"/><rect x="1" y="4" width="13" height="3" fill="#f5d43a"/><circle cx="14.5" cy="11.5" r="4" fill="#45b045"/><path d="M12 11.5H17M14.5 9V14" stroke="#fff" stroke-width="1.5"/></svg>
<svg style="left:695px;top:337px" width="19" height="16" viewBox="0 0 19 16"><rect x="0.5" y="0.5" width="14" height="12" fill="#fff" stroke="#999"/><path d="M1 3.5H14M1 6.5H14M1 9.5H14M5 1V12M10 1V12" stroke="#bbb"/><rect x="1" y="4" width="13" height="3" fill="#f5d43a"/><rect x="10" y="9.5" width="9" height="3.5" fill="#e05a3a"/></svg>
<div class="a" style="left:722px;top:337px;width:1px;height:15px;background:#7a8aa0"></div>
<div class="t" style="left:727px;top:341px;font-size:10.3px;color:#333;">Export/Import:</div>
<svg style="left:803px;top:336px" width="19" height="18" viewBox="0 0 19 18"><rect x="0.5" y="0.5" width="12" height="11" fill="#fff" stroke="#999"/><path d="M1 3.5H12M1 6.5H12M1 9.5H12M4.5 1V11M8.5 1V11" stroke="#bbb"/><rect x="7.5" y="7.5" width="11" height="10" rx="1" fill="#5b7fa8" stroke="#34557a"/><rect x="10" y="8" width="6" height="3" fill="#dfe8f2"/><rect x="10" y="13" width="6" height="4" fill="#34557a"/></svg>
<svg style="left:830px;top:336px" width="19" height="18" viewBox="0 0 19 18"><rect x="0.5" y="0.5" width="12" height="11" fill="#fff" stroke="#999"/><path d="M1 3.5H12M1 6.5H12M1 9.5H12M4.5 1V11M8.5 1V11" stroke="#bbb"/><rect x="5.5" y="6.5" width="13" height="11" fill="#a8c8e8" stroke="#5a7aa0"/><path d="M12 9L9 12H11V15H13V12H15Z" fill="#fff" stroke="#5a7aa0" stroke-width="0.6"/></svg>
<div class="a" style="left:857px;top:337px;width:1px;height:15px;background:#7a8aa0"></div>
<div class="t" style="left:861px;top:341px;font-size:10.3px;color:#333;">Wrap Cell Content:</div>
<svg style="left:957px;top:337px" width="13" height="15" viewBox="0 0 13 15"><path d="M1 1H5M3 1V14M1 14H5M2 4.5L3 2L4 4.5M2 10.5L3 13L4 10.5" stroke="#34557a" stroke-width="1.1" fill="none"/><text x="5.5" y="12" font-size="10" fill="#34557a" font-family="Liberation Sans">A</text></svg>
<div class="a" style="left:981px;top:337px;width:1px;height:15px;background:#7a8aa0"></div>
<div class="t" style="left:986px;top:341px;font-size:10.3px;color:#333;">Fetch rows:</div>
<svg style="left:1048px;top:335px" width="19" height="16" viewBox="0 0 19 16"><rect x="0.5" y="5.5" width="12" height="10" fill="#fff" stroke="#999"/><path d="M1 8.5H12M1 11.5H12M4.5 6V15M8.5 6V15" stroke="#aaa"/><path d="M14 1L18 5H16V9H12V5H10Z" fill="#8ab8e8" stroke="#2a5a98" stroke-width="0.8"/></svg>
<svg style="left:1075px;top:335px" width="19" height="16" viewBox="0 0 19 16"><rect x="0.5" y="0.5" width="12" height="10" fill="#fff" stroke="#999"/><path d="M1 3.5H12M1 6.5H12M4.5 1V10M8.5 1V10" stroke="#aaa"/><path d="M14 13L18 9H16V5H12V9H10Z" fill="#8ab8e8" stroke="#2a5a98" stroke-width="0.8"/></svg>
<svg style="left:1224px;top:337px" width="15" height="14" viewBox="0 0 15 14"><rect x="0.5" y="0.5" width="13" height="12" fill="#fff" stroke="#222"/><rect x="9" y="1" width="4.5" height="11" fill="#444"/></svg>
<div class="a" style="left:317px;top:356px;width:913px;height:453px;background:#fff;overflow:hidden"></div>
<div class="a" style="left:317px;top:356px;width:620px;height:1px;background:#9a9a9a"></div>
<div class="a" style="left:317px;top:356px;width:1px;height:453px;background:#9a9a9a"></div>
<div class="a" style="left:342px;top:357px;width:1px;height:452px;background:#9a9a9a"></div>
<div class="a" style="left:318px;top:376px;width:619px;height:1px;background:#9a9a9a"></div>
<div class="a" style="left:382px;top:358px;width:1px;height:18px;background:#dcdcdc"></div>
<div class="a" style="left:434px;top:358px;width:1px;height:18px;background:#dcdcdc"></div>
<div class="a" style="left:499px;top:358px;width:1px;height:18px;background:#dcdcdc"></div>
<div class="a" style="left:556px;top:358px;width:1px;height:18px;background:#dcdcdc"></div>
<div class="a" style="left:686px;top:358px;width:1px;height:18px;background:#dcdcdc"></div>
<div class="a" style="left:936px;top:358px;width:1px;height:18px;background:#dcdcdc"></div>
<div class="t" style="left:349px;top:362px;font-size:10.8px;color:#111;">id</div>
<div class="t" style="left:389px;top:362px;font-size:10.8px;color:#111;">user_id</div>
<div class="t" style="left:441px;top:362px;font-size:10.8px;color:#111;">project_id</div>
<div class="t" style="left:506px;top:362px;font-size:10.8px;color:#111;">is_public</div>
<div class="t" style="left:563px;top:362px;font-size:10.8px;color:#111;">name</div>
<div class="t" style="left:694px;top:362px;font-size:10.8px;color:#111;">filter_string</div>
<div class="a" style="left:317px;top:377px;width:913px;height:432px;overflow:hidden">
<div class="a" style="left:2px;top:14px;width:24px;height:1px;background:#e2e2e2"></div>
<div class="a" style="left:26px;top:0px;width:39px;height:14px;overflow:hidden;"><div class="a" style="left:0;top:0;width:39px;height:13px;overflow:hidden"><div class="t" style="left:3px;top:4px;font-size:10.8px;color:#000">277</div></div></div>
<div class="a" style="left:66px;top:0px;width:51px;height:14px;overflow:hidden;"><div class="a" style="left:0;top:0;width:51px;height:13px;overflow:hidden"><div class="t" style="left:2px;top:4px;font-size:10.8px;color:#000">64</div></div></div>
<div class="a" style="left:118px;top:0px;width:64px;height:14px;overflow:hidden;"><div class="a" style="left:0;top:0;width:64px;height:13px;overflow:hidden"><div class="t" style="left:2px;top:4px;font-size:10.8px;color:#000">-19</div></div></div>
<div class="a" style="left:183px;top:0px;width:56px;height:14px;overflow:hidden;"><div class="a" style="left:0;top:0;width:56px;height:13px;overflow:hidden"><div class="t" style="left:2px;top:4px;font-size:10.8px;color:#000">0</div></div></div>
<div class="a" style="left:240px;top:0px;width:129px;height:14px;overflow:hidden;"><div class="a" style="left:0;top:0;width:129px;height:13px;overflow:hidden"><div class="t" style="left:2px;top:4px;font-size:10.8px;color:#000"></div></div></div>
<div class="a" style="left:370px;top:0px;width:249px;height:14px;overflow:hidden;"><div class="a" style="left:0;top:0;width:249px;height:13px;overflow:hidden"><div class="t" style="left:2px;top:4px;font-size:10.8px;letter-spacing:0.28px;color:#000">v9#{"_version":"v9","_view_type":"simple","pe...</div></div></div>
<div class="a" style="left:2px;top:29px;width:24px;height:1px;background:#e2e2e2"></div>
<div class="a" style="left:26px;top:15px;width:39px;height:14px;overflow:hidden;background:#ebf2fb;"><div class="a" style="left:0;top:0;width:39px;height:13px;overflow:hidden"><div class="t" style="left:3px;top:4px;font-size:10.8px;color:#000">279</div></div></div>
<div class="a" style="left:66px;top:15px;width:51px;height:14px;overflow:hidden;background:#ebf2fb;"><div class="a" style="left:0;top:0;width:51px;height:13px;overflow:hidden"><div class="t" style="left:2px;top:4px;font-size:10.8px;color:#000">17</div></div></div>
<div class="a" style="left:118px;top:15px;width:64px;height:14px;overflow:hidden;background:#ebf2fb;"><div class="a" style="left:0;top:0;width:64px;height:13px;overflow:hidden"><div class="t" style="left:2px;top:4px;font-size:10.8px;color:#000">-21</div></div></div>
<div class="a" style="left:183px;top:15px;width:56px;height:14px;overflow:hidden;background:#ebf2fb;"><div class="a" style="left:0;top:0;width:56px;height:13px;overflow:hidden"><div class="t" style="left:2px;top:4px;font-size:10.8px;color:#000">0</div></div></div>
<div class="a" style="left:240px;top:15px;width:129px;height:14px;overflow:hidden;background:#ebf2fb;"><div class="a" style="left:0;top:0;width:129px;height:13px;overflow:hidden"><div class="t" style="left:2px;top:4px;font-size:10.8px;color:#000"></div></div></div>
<div class="a" style="left:370px;top:15px;width:249px;height:14px;overflow:hidden;background:#ebf2fb;"><div class="a" style="left:0;top:0;width:249px;height:13px;overflow:hidden"><div class="t" style="left:2px;top:4px;font-size:10.8px;letter-spacing:0.28px;color:#000">v9#{"_version":"v9","_view_type":"simple","pe...</div></div></div>
<div class="a" style="left:2px;top:44px;width:24px;height:1px;background:#e2e2e2"></div>
<div class="a" style="left:26px;top:30px;width:39px;height:14px;overflow:hidden;"><div class="a" style="left:0;top:0;width:39px;height:13px;overflow:hidden"><div class="t" style="left:3px;top:4px;font-size:10.8px;color:#000">280</div></div></div>
<div class="a" style="left:66px;top:30px;width:51px;height:14px;overflow:hidden;"><div class="a" style="left:0;top:0;width:51px;height:13px;overflow:hidden"><div class="t" style="left:2px;top:4px;font-size:10.8px;color:#000">31</div></div></div>
<div class="a" style="left:118px;top:30px;width:64px;height:14px;overflow:hidden;"><div class="a" style="left:0;top:0;width:64px;height:13px;overflow:hidden"><div class="t" style="left:2px;top:4px;font-size:10.8px;color:#000">-25</div></div></div>
<div class="a" style="left:183px;top:30px;width:56px;height:14px;overflow:hidden;"><div class="a" style="left:0;top:0;width:56px;height:13px;overflow:hidden"><div class="t" style="left:2px;top:4px;font-size:10.8px;color:#000">0</div></div></div>
<div class="a" style="left:240px;top:30px;width:129px;height:14px;overflow:hidden;"><div class="a" style="left:0;top:0;width:129px;height:13px;overflow:hidden"><div class="t" style="left:2px;top:4px;font-size:10.8px;color:#000"></div></div></div>
<div class="a" style="left:370px;top:30px;width:249px;height:14px;overflow:hidden;"><div class="a" style="left:0;top:0;width:249px;height:13px;overflow:hidden"><div class="t" style="left:2px;top:4px;font-size:10.8px;letter-spacing:0.28px;color:#000">v9#{"_version":"v9","_view_type":"simple","pe...</div></div></div>
<div class="a" style="left:2px;top:59px;width:24px;height:1px;background:#e2e2e2"></div>
<div class="a" style="left:26px;top:45px;width:39px;height:14px;overflow:hidden;background:#ebf2fb;"><div class="a" style="left:0;top:0;width:39px;height:13px;overflow:hidden"><div class="t" style="left:3px;top:4px;font-size:10.8px;color:#000">285</div></div></div>
<div class="a" style="left:66px;top:45px;width:51px;height:14px;overflow:hidden;background:#ebf2fb;"><div class="a" style="left:0;top:0;width:51px;height:13px;overflow:hidden"><div class="t" style="left:2px;top:4px;font-size:10.8px;color:#000">83</div></div></div>
<div class="a" style="left:118px;top:45px;width:64px;height:14px;overflow:hidden;background:#ebf2fb;"><div class="a" style="left:0;top:0;width:64px;height:13px;overflow:hidden"><div class="t" style="left:2px;top:4px;font-size:10.8px;color:#000">-18</div></div></div>
<div class="a" style="left:183px;top:45px;width:56px;height:14px;overflow:hidden;background:#ebf2fb;"><div class="a" style="left:0;top:0;width:56px;height:13px;overflow:hidden"><div class="t" style="left:2px;top:4px;font-size:10.8px;color:#000">0</div></div></div>
<div class="a" style="left:240px;top:45px;width:129px;height:14px;overflow:hidden;background:#ebf2fb;"><div class="a" style="left:0;top:0;width:129px;height:13px;overflow:hidden"><div class="t" style="left:2px;top:4px;font-size:10.8px;color:#000"></div></div></div>
<div class="a" style="left:370px;top:45px;width:249px;height:14px;overflow:hidden;background:#ebf2fb;"><div class="a" style="left:0;top:0;width:249px;height:13px;overflow:hidden"><div class="t" style="left:2px;top:4px;font-size:10.8px;letter-spacing:0.28px;color:#000">v9#{"_version":"v9","_view_type":"simple","pe...</div></div></div>
<div class="a" style="left:2px;top:74px;width:24px;height:1px;background:#e2e2e2"></div>
<div class="a" style="left:26px;top:60px;width:39px;height:14px;overflow:hidden;"><div class="a" style="left:0;top:0;width:39px;height:13px;overflow:hidden"><div class="t" style="left:3px;top:4px;font-size:10.8px;color:#000">289</div></div></div>
<div class="a" style="left:66px;top:60px;width:51px;height:14px;overflow:hidden;"><div class="a" style="left:0;top:0;width:51px;height:13px;overflow:hidden"><div class="t" style="left:2px;top:4px;font-size:10.8px;color:#000">24</div></div></div>
<div class="a" style="left:118px;top:60px;width:64px;height:14px;overflow:hidden;"><div class="a" style="left:0;top:0;width:64px;height:13px;overflow:hidden"><div class="t" style="left:2px;top:4px;font-size:10.8px;color:#000">-17</div></div></div>
<div class="a" style="left:183px;top:60px;width:56px;height:14px;overflow:hidden;"><div class="a" style="left:0;top:0;width:56px;height:13px;overflow:hidden"><div class="t" style="left:2px;top:4px;font-size:10.8px;color:#000">0</div></div></div>
<div class="a" style="left:240px;top:60px;width:129px;height:14px;overflow:hidden;"><div class="a" style="left:0;top:0;width:129px;height:13px;overflow:hidden"><div class="t" style="left:2px;top:4px;font-size:10.8px;color:#000"></div></div></div>
<div class="a" style="left:370px;top:60px;width:249px;height:14px;overflow:hidden;"><div class="a" style="left:0;top:0;width:249px;height:13px;overflow:hidden"><div class="t" style="left:2px;top:4px;font-size:10.8px;letter-spacing:0.28px;color:#000">v9#{"_version":"v9","_view_type":"simple","pe...</div></div></div>
<div class="a" style="left:2px;top:89px;width:24px;height:1px;background:#e2e2e2"></div>
<div class="a" style="left:26px;top:75px;width:39px;height:14px;overflow:hidden;background:#ebf2fb;"><div class="a" style="left:0;top:0;width:39px;height:13px;overflow:hidden"><div class="t" style="left:3px;top:4px;font-size:10.8px;color:#000">281</div></div></div>
<div class="a" style="left:66px;top:75px;width:51px;height:14px;overflow:hidden;background:#ebf2fb;"><div class="a" style="left:0;top:0;width:51px;height:13px;overflow:hidden"><div class="t" style="left:2px;top:4px;font-size:10.8px;color:#000">82</div></div></div>
<div class="a" style="left:118px;top:75px;width:64px;height:14px;overflow:hidden;background:#ebf2fb;"><div class="a" style="left:0;top:0;width:64px;height:13px;overflow:hidden"><div class="t" style="left:2px;top:4px;font-size:10.8px;color:#000">-19</div></div></div>
<div class="a" style="left:183px;top:75px;width:56px;height:14px;overflow:hidden;background:#ebf2fb;"><div class="a" style="left:0;top:0;width:56px;height:13px;overflow:hidden"><div class="t" style="left:2px;top:4px;font-size:10.8px;color:#000">0</div></div></div>
<div class="a" style="left:240px;top:75px;width:129px;height:14px;overflow:hidden;background:#ebf2fb;"><div class="a" style="left:0;top:0;width:129px;height:13px;overflow:hidden"><div class="t" style="left:2px;top:4px;font-size:10.8px;color:#000"></div></div></div>
<div class="a" style="left:370px;top:75px;width:249px;height:14px;overflow:hidden;background:#ebf2fb;"><div class="a" style="left:0;top:0;width:249px;height:13px;overflow:hidden"><div class="t" style="left:2px;top:4px;font-size:10.8px;letter-spacing:0.28px;color:#000">v9#{"_version":"v9","_view_type":"simple","pe...</div></div></div>
<div class="a" style="left:2px;top:104px;width:24px;height:1px;background:#e2e2e2"></div>
<div class="a" style="left:26px;top:90px;width:39px;height:14px;overflow:hidden;"><div class="a" style="left:0;top:0;width:39px;height:13px;overflow:hidden"><div class="t" style="left:3px;top:4px;font-size:10.8px;color:#000">282</div></div></div>
<div class="a" style="left:66px;top:90px;width:51px;height:14px;overflow:hidden;"><div class="a" style="left:0;top:0;width:51px;height:13px;overflow:hidden"><div class="t" style="left:2px;top:4px;font-size:10.8px;color:#000">63</div></div></div>
<div class="a" style="left:118px;top:90px;width:64px;height:14px;overflow:hidden;"><div class="a" style="left:0;top:0;width:64px;height:13px;overflow:hidden"><div class="t" style="left:2px;top:4px;font-size:10.8px;color:#000">-19</div></div></div>
<div class="a" style="left:183px;top:90px;width:56px;height:14px;overflow:hidden;"><div class="a" style="left:0;top:0;width:56px;height:13px;overflow:hidden"><div class="t" style="left:2px;top:4px;font-size:10.8px;color:#000">0</div></div></div>
<div class="a" style="left:240px;top:90px;width:129px;height:14px;overflow:hidden;"><div class="a" style="left:0;top:0;width:129px;height:13px;overflow:hidden"><div class="t" style="left:2px;top:4px;font-size:10.8px;color:#000"></div></div></div>
<div class="a" style="left:370px;top:90px;width:249px;height:14px;overflow:hidden;"><div class="a" style="left:0;top:0;width:249px;height:13px;overflow:hidden"><div class="t" style="left:2px;top:4px;font-size:10.8px;letter-spacing:0.28px;color:#000">v9#{"_version":"v9","_view_type":"simple","pe...</div></div></div>
<div class="a" style="left:2px;top:119px;width:24px;height:1px;background:#e2e2e2"></div>
<div class="a" style="left:26px;top:105px;width:39px;height:14px;overflow:hidden;background:#ebf2fb;"><div class="a" style="left:0;top:0;width:39px;height:13px;overflow:hidden"><div class="t" style="left:3px;top:4px;font-size:10.8px;color:#000">283</div></div></div>
<div class="a" style="left:66px;top:105px;width:51px;height:14px;overflow:hidden;background:#ebf2fb;"><div class="a" style="left:0;top:0;width:51px;height:13px;overflow:hidden"><div class="t" style="left:2px;top:4px;font-size:10.8px;color:#000">45</div></div></div>
<div class="a" style="left:118px;top:105px;width:64px;height:14px;overflow:hidden;background:#ebf2fb;"><div class="a" style="left:0;top:0;width:64px;height:13px;overflow:hidden"><div class="t" style="left:2px;top:4px;font-size:10.8px;color:#000">-21</div></div></div>
<div class="a" style="left:183px;top:105px;width:56px;height:14px;overflow:hidden;background:#ebf2fb;"><div class="a" style="left:0;top:0;width:56px;height:13px;overflow:hidden"><div class="t" style="left:2px;top:4px;font-size:10.8px;color:#000">0</div></div></div>
<div class="a" style="left:240px;top:105px;width:129px;height:14px;overflow:hidden;background:#ebf2fb;"><div class="a" style="left:0;top:0;width:129px;height:13px;overflow:hidden"><div class="t" style="left:2px;top:4px;font-size:10.8px;color:#000"></div></div></div>
<div class="a" style="left:370px;top:105px;width:249px;height:14px;overflow:hidden;background:#ebf2fb;"><div class="a" style="left:0;top:0;width:249px;height:13px;overflow:hidden"><div class="t" style="left:2px;top:4px;font-size:10.8px;letter-spacing:0.28px;color:#000">v9#{"_version":"v9","_view_type":"simple","pe...</div></div></div>
<div class="a" style="left:2px;top:134px;width:24px;height:1px;background:#e2e2e2"></div>
<div class="a" style="left:26px;top:120px;width:39px;height:14px;overflow:hidden;"><div class="a" style="left:0;top:0;width:39px;height:13px;overflow:hidden"><div class="t" style="left:3px;top:4px;font-size:10.8px;color:#000">288</div></div></div>
<div class="a" style="left:66px;top:120px;width:51px;height:14px;overflow:hidden;"><div class="a" style="left:0;top:0;width:51px;height:13px;overflow:hidden"><div class="t" style="left:2px;top:4px;font-size:10.8px;color:#000">81</div></div></div>
<div class="a" style="left:118px;top:120px;width:64px;height:14px;overflow:hidden;"><div class="a" style="left:0;top:0;width:64px;height:13px;overflow:hidden"><div class="t" style="left:2px;top:4px;font-size:10.8px;color:#000">-19</div></div></div>
<div class="a" style="left:183px;top:120px;width:56px;height:14px;overflow:hidden;"><div class="a" style="left:0;top:0;width:56px;height:13px;overflow:hidden"><div class="t" style="left:2px;top:4px;font-size:10.8px;color:#000">0</div></div></div>
<div class="a" style="left:240px;top:120px;width:129px;height:14px;overflow:hidden;"><div class="a" style="left:0;top:0;width:129px;height:13px;overflow:hidden"><div class="t" style="left:2px;top:4px;font-size:10.8px;color:#000"></div></div></div>
<div class="a" style="left:370px;top:120px;width:249px;height:14px;overflow:hidden;"><div class="a" style="left:0;top:0;width:249px;height:13px;overflow:hidden"><div class="t" style="left:2px;top:4px;font-size:10.8px;letter-spacing:0.28px;color:#000">v9#{"_version":"v9","_view_type":"simple","pe...</div></div></div>
<div class="a" style="left:2px;top:149px;width:24px;height:1px;background:#e2e2e2"></div>
<div class="a" style="left:26px;top:135px;width:39px;height:14px;overflow:hidden;background:#ebf2fb;"><div class="a" style="left:0;top:0;width:39px;height:13px;overflow:hidden"><div class="t" style="left:3px;top:4px;font-size:10.8px;color:#000">292</div></div></div>
<div class="a" style="left:66px;top:135px;width:51px;height:14px;overflow:hidden;background:#ebf2fb;"><div class="a" style="left:0;top:0;width:51px;height:13px;overflow:hidden"><div class="t" style="left:2px;top:4px;font-size:10.8px;color:#000">85</div></div></div>
<div class="a" style="left:118px;top:135px;width:64px;height:14px;overflow:hidden;background:#ebf2fb;"><div class="a" style="left:0;top:0;width:64px;height:13px;overflow:hidden"><div class="t" style="left:2px;top:4px;font-size:10.8px;color:#000">0</div></div></div>
<div class="a" style="left:183px;top:135px;width:56px;height:14px;overflow:hidden;background:#ebf2fb;"><div class="a" style="left:0;top:0;width:56px;height:13px;overflow:hidden"><div class="t" style="left:2px;top:4px;font-size:10.8px;color:#000">0</div></div></div>
<div class="a" style="left:240px;top:135px;width:129px;height:14px;overflow:hidden;background:#ebf2fb;"><div class="a" style="left:0;top:0;width:129px;height:13px;overflow:hidden"><div class="t" style="left:2px;top:4px;font-size:10.8px;color:#000"></div></div></div>
<div class="a" style="left:370px;top:135px;width:249px;height:14px;overflow:hidden;background:#ebf2fb;"><div class="a" style="left:0;top:0;width:249px;height:13px;overflow:hidden"><div class="t" style="left:2px;top:4px;font-size:10.8px;letter-spacing:0.28px;color:#000">v9#{"_version":"v9","_view_type":"simple","pe...</div></div></div>
<div class="a" style="left:2px;top:164px;width:24px;height:1px;background:#e2e2e2"></div>
<div class="a" style="left:26px;top:150px;width:39px;height:14px;overflow:hidden;"><div class="a" style="left:0;top:0;width:39px;height:13px;overflow:hidden"><div class="t" style="left:3px;top:4px;font-size:10.8px;color:#000">296</div></div></div>
<div class="a" style="left:66px;top:150px;width:51px;height:14px;overflow:hidden;"><div class="a" style="left:0;top:0;width:51px;height:13px;overflow:hidden"><div class="t" style="left:2px;top:4px;font-size:10.8px;color:#000">48</div></div></div>
<div class="a" style="left:118px;top:150px;width:64px;height:14px;overflow:hidden;"><div class="a" style="left:0;top:0;width:64px;height:13px;overflow:hidden"><div class="t" style="left:2px;top:4px;font-size:10.8px;color:#000">-28</div></div></div>
<div class="a" style="left:183px;top:150px;width:56px;height:14px;overflow:hidden;"><div class="a" style="left:0;top:0;width:56px;height:13px;overflow:hidden"><div class="t" style="left:2px;top:4px;font-size:10.8px;color:#000">0</div></div></div>
<div class="a" style="left:240px;top:150px;width:129px;height:14px;overflow:hidden;"><div class="a" style="left:0;top:0;width:129px;height:13px;overflow:hidden"><div class="t" style="left:2px;top:4px;font-size:10.8px;color:#000"></div></div></div>
<div class="a" style="left:370px;top:150px;width:249px;height:14px;overflow:hidden;"><div class="a" style="left:0;top:0;width:249px;height:13px;overflow:hidden"><div class="t" style="left:2px;top:4px;font-size:10.8px;letter-spacing:0.28px;color:#000">v9#{"_version":"v9","_view_type":"simple","pe...</div></div></div>
<div class="a" style="left:2px;top:179px;width:24px;height:1px;background:#e2e2e2"></div>
<div class="a" style="left:26px;top:165px;width:39px;height:14px;overflow:hidden;background:#ebf2fb;"><div class="a" style="left:0;top:0;width:39px;height:13px;overflow:hidden"><div class="t" style="left:3px;top:4px;font-size:10.8px;color:#000">286</div></div></div>
<div class="a" style="left:66px;top:165px;width:51px;height:14px;overflow:hidden;background:#ebf2fb;"><div class="a" style="left:0;top:0;width:51px;height:13px;overflow:hidden"><div class="t" style="left:2px;top:4px;font-size:10.8px;color:#000">64</div></div></div>
<div class="a" style="left:118px;top:165px;width:64px;height:14px;overflow:hidden;background:#ebf2fb;"><div class="a" style="left:0;top:0;width:64px;height:13px;overflow:hidden"><div class="t" style="left:2px;top:4px;font-size:10.8px;color:#000">0</div></div></div>
<div class="a" style="left:183px;top:165px;width:56px;height:14px;overflow:hidden;background:#ebf2fb;"><div class="a" style="left:0;top:0;width:56px;height:13px;overflow:hidden"><div class="t" style="left:2px;top:4px;font-size:10.8px;color:#000">0</div></div></div>
<div class="a" style="left:240px;top:165px;width:129px;height:14px;overflow:hidden;background:#ebf2fb;"><div class="a" style="left:0;top:0;width:129px;height:13px;overflow:hidden"><div class="t" style="left:2px;top:4px;font-size:10.8px;color:#000"></div></div></div>
<div class="a" style="left:370px;top:165px;width:249px;height:14px;overflow:hidden;background:#ebf2fb;"><div class="a" style="left:0;top:0;width:249px;height:13px;overflow:hidden"><div class="t" style="left:2px;top:4px;font-size:10.8px;letter-spacing:0.28px;color:#000">v9#{"_version":"v9","_view_type":"simple","pe...</div></div></div>
<div class="a" style="left:2px;top:194px;width:24px;height:1px;background:#e2e2e2"></div>
<div class="a" style="left:26px;top:180px;width:39px;height:14px;overflow:hidden;"><div class="a" style="left:0;top:0;width:39px;height:13px;overflow:hidden"><div class="t" style="left:3px;top:4px;font-size:10.8px;color:#000">321</div></div></div>
<div class="a" style="left:66px;top:180px;width:51px;height:14px;overflow:hidden;"><div class="a" style="left:0;top:0;width:51px;height:13px;overflow:hidden"><div class="t" style="left:2px;top:4px;font-size:10.8px;color:#000">58</div></div></div>
<div class="a" style="left:118px;top:180px;width:64px;height:14px;overflow:hidden;"><div class="a" style="left:0;top:0;width:64px;height:13px;overflow:hidden"><div class="t" style="left:2px;top:4px;font-size:10.8px;color:#000">-17</div></div></div>
<div class="a" style="left:183px;top:180px;width:56px;height:14px;overflow:hidden;"><div class="a" style="left:0;top:0;width:56px;height:13px;overflow:hidden"><div class="t" style="left:2px;top:4px;font-size:10.8px;color:#000">0</div></div></div>
<div class="a" style="left:240px;top:180px;width:129px;height:14px;overflow:hidden;"><div class="a" style="left:0;top:0;width:129px;height:13px;overflow:hidden"><div class="t" style="left:2px;top:4px;font-size:10.8px;color:#000"></div></div></div>
<div class="a" style="left:370px;top:180px;width:249px;height:14px;overflow:hidden;"><div class="a" style="left:0;top:0;width:249px;height:13px;overflow:hidden"><div class="t" style="left:2px;top:4px;font-size:10.8px;letter-spacing:0.28px;color:#000">v9#{"_version":"v9","_view_type":"simple","pe...</div></div></div>
<div class="a" style="left:2px;top:209px;width:24px;height:1px;background:#e2e2e2"></div>
<div class="a" style="left:26px;top:195px;width:39px;height:14px;overflow:hidden;background:#ebf2fb;"><div class="a" style="left:0;top:0;width:39px;height:13px;overflow:hidden"><div class="t" style="left:3px;top:4px;font-size:10.8px;color:#000">290</div></div></div>
<div class="a" style="left:66px;top:195px;width:51px;height:14px;overflow:hidden;background:#ebf2fb;"><div class="a" style="left:0;top:0;width:51px;height:13px;overflow:hidden"><div class="t" style="left:2px;top:4px;font-size:10.8px;color:#000">27</div></div></div>
<div class="a" style="left:118px;top:195px;width:64px;height:14px;overflow:hidden;background:#ebf2fb;"><div class="a" style="left:0;top:0;width:64px;height:13px;overflow:hidden"><div class="t" style="left:2px;top:4px;font-size:10.8px;color:#000">-26</div></div></div>
<div class="a" style="left:183px;top:195px;width:56px;height:14px;overflow:hidden;background:#ebf2fb;"><div class="a" style="left:0;top:0;width:56px;height:13px;overflow:hidden"><div class="t" style="left:2px;top:4px;font-size:10.8px;color:#000">0</div></div></div>
<div class="a" style="left:240px;top:195px;width:129px;height:14px;overflow:hidden;background:#ebf2fb;"><div class="a" style="left:0;top:0;width:129px;height:13px;overflow:hidden"><div class="t" style="left:2px;top:4px;font-size:10.8px;color:#000"></div></div></div>
<div class="a" style="left:370px;top:195px;width:249px;height:14px;overflow:hidden;background:#ebf2fb;"><div class="a" style="left:0;top:0;width:249px;height:13px;overflow:hidden"><div class="t" style="left:2px;top:4px;font-size:10.8px;letter-spacing:0.28px;color:#000">v9#{"_version":"v9","_view_type":"simple","pe...</div></div></div>
<div class="a" style="left:2px;top:224px;width:24px;height:1px;background:#e2e2e2"></div>
<div class="a" style="left:2px;top:210px;width:24px;height:15px;background:#b8d8f2"></div>
<div class="a" style="left:26px;top:210px;width:39px;height:14px;overflow:hidden;"><div class="a" style="left:3px;top:0px;width:19px;height:14px;background:#0060b8"></div><div class="a" style="left:0;top:0;width:39px;height:13px;overflow:hidden"><div class="t" style="left:3px;top:4px;font-size:10.8px;color:#fff">293</div></div></div>
<div class="a" style="left:66px;top:210px;width:51px;height:14px;overflow:hidden;background:#0078d7;"><div class="a" style="left:0;top:0;width:51px;height:13px;overflow:hidden"><div class="t" style="left:2px;top:4px;font-size:10.8px;color:#fff">24</div></div></div>
<div class="a" style="left:118px;top:210px;width:64px;height:14px;overflow:hidden;background:#0078d7;"><div class="a" style="left:0;top:0;width:64px;height:13px;overflow:hidden"><div class="t" style="left:2px;top:4px;font-size:10.8px;color:#fff">17</div></div></div>
<div class="a" style="left:183px;top:210px;width:56px;height:14px;overflow:hidden;background:#0078d7;"><div class="a" style="left:0;top:0;width:56px;height:13px;overflow:hidden"><div class="t" style="left:2px;top:4px;font-size:10.8px;color:#fff">0</div></div></div>
<div class="a" style="left:240px;top:210px;width:129px;height:14px;overflow:hidden;background:#0078d7;"><div class="a" style="left:0;top:0;width:129px;height:13px;overflow:hidden"><div class="t" style="left:2px;top:4px;font-size:10.8px;color:#fff">MacroScreen</div></div></div>
<div class="a" style="left:370px;top:210px;width:249px;height:14px;overflow:hidden;background:#0078d7;"><div class="a" style="left:0;top:0;width:249px;height:13px;overflow:hidden"><div class="t" style="left:2px;top:4px;font-size:10.8px;letter-spacing:0.28px;color:#fff">v7#a:33:{s:8:"_version";s:2:"v7";s:10:"_view_ ...</div></div></div>
<div class="a" style="left:2px;top:239px;width:24px;height:1px;background:#e2e2e2"></div>
<div class="a" style="left:26px;top:225px;width:39px;height:14px;overflow:hidden;background:#ebf2fb;"><div class="a" style="left:0;top:0;width:39px;height:13px;overflow:hidden"><div class="t" style="left:3px;top:4px;font-size:10.8px;color:#000">294</div></div></div>
<div class="a" style="left:66px;top:225px;width:51px;height:14px;overflow:hidden;background:#ebf2fb;"><div class="a" style="left:0;top:0;width:51px;height:13px;overflow:hidden"><div class="t" style="left:2px;top:4px;font-size:10.8px;color:#000">26</div></div></div>
<div class="a" style="left:118px;top:225px;width:64px;height:14px;overflow:hidden;background:#ebf2fb;"><div class="a" style="left:0;top:0;width:64px;height:13px;overflow:hidden"><div class="t" style="left:2px;top:4px;font-size:10.8px;color:#000">-25</div></div></div>
<div class="a" style="left:183px;top:225px;width:56px;height:14px;overflow:hidden;background:#ebf2fb;"><div class="a" style="left:0;top:0;width:56px;height:13px;overflow:hidden"><div class="t" style="left:2px;top:4px;font-size:10.8px;color:#000">0</div></div></div>
<div class="a" style="left:240px;top:225px;width:129px;height:14px;overflow:hidden;background:#ebf2fb;"><div class="a" style="left:0;top:0;width:129px;height:13px;overflow:hidden"><div class="t" style="left:2px;top:4px;font-size:10.8px;color:#000"></div></div></div>
<div class="a" style="left:370px;top:225px;width:249px;height:14px;overflow:hidden;background:#ebf2fb;"><div class="a" style="left:0;top:0;width:249px;height:13px;overflow:hidden"><div class="t" style="left:2px;top:4px;font-size:10.8px;letter-spacing:0.28px;color:#000">v7#a:33:{s:8:"_version";s:2:"v7";s:10:"_view_ ...</div></div></div>
<div class="a" style="left:2px;top:254px;width:24px;height:1px;background:#e2e2e2"></div>
<div class="a" style="left:26px;top:240px;width:39px;height:14px;overflow:hidden;"><div class="a" style="left:0;top:0;width:39px;height:13px;overflow:hidden"><div class="t" style="left:3px;top:4px;font-size:10.8px;color:#000">295</div></div></div>
<div class="a" style="left:66px;top:240px;width:51px;height:14px;overflow:hidden;"><div class="a" style="left:0;top:0;width:51px;height:13px;overflow:hidden"><div class="t" style="left:2px;top:4px;font-size:10.8px;color:#000">15</div></div></div>
<div class="a" style="left:118px;top:240px;width:64px;height:14px;overflow:hidden;"><div class="a" style="left:0;top:0;width:64px;height:13px;overflow:hidden"><div class="t" style="left:2px;top:4px;font-size:10.8px;color:#000">-28</div></div></div>
<div class="a" style="left:183px;top:240px;width:56px;height:14px;overflow:hidden;"><div class="a" style="left:0;top:0;width:56px;height:13px;overflow:hidden"><div class="t" style="left:2px;top:4px;font-size:10.8px;color:#000">0</div></div></div>
<div class="a" style="left:240px;top:240px;width:129px;height:14px;overflow:hidden;"><div class="a" style="left:0;top:0;width:129px;height:13px;overflow:hidden"><div class="t" style="left:2px;top:4px;font-size:10.8px;color:#000"></div></div></div>
<div class="a" style="left:370px;top:240px;width:249px;height:14px;overflow:hidden;"><div class="a" style="left:0;top:0;width:249px;height:13px;overflow:hidden"><div class="t" style="left:2px;top:4px;font-size:10.8px;letter-spacing:0.28px;color:#000">v7#a:33:{s:8:"_version";s:2:"v7";s:10:"_view_ ...</div></div></div>
<div class="a" style="left:2px;top:269px;width:24px;height:1px;background:#e2e2e2"></div>
<div class="a" style="left:26px;top:255px;width:39px;height:14px;overflow:hidden;background:#ebf2fb;"><div class="a" style="left:0;top:0;width:39px;height:13px;overflow:hidden"><div class="t" style="left:3px;top:4px;font-size:10.8px;color:#000">320</div></div></div>
<div class="a" style="left:66px;top:255px;width:51px;height:14px;overflow:hidden;background:#ebf2fb;"><div class="a" style="left:0;top:0;width:51px;height:13px;overflow:hidden"><div class="t" style="left:2px;top:4px;font-size:10.8px;color:#000">88</div></div></div>
<div class="a" style="left:118px;top:255px;width:64px;height:14px;overflow:hidden;background:#ebf2fb;"><div class="a" style="left:0;top:0;width:64px;height:13px;overflow:hidden"><div class="t" style="left:2px;top:4px;font-size:10.8px;color:#000">0</div></div></div>
<div class="a" style="left:183px;top:255px;width:56px;height:14px;overflow:hidden;background:#ebf2fb;"><div class="a" style="left:0;top:0;width:56px;height:13px;overflow:hidden"><div class="t" style="left:2px;top:4px;font-size:10.8px;color:#000">0</div></div></div>
<div class="a" style="left:240px;top:255px;width:129px;height:14px;overflow:hidden;background:#ebf2fb;"><div class="a" style="left:0;top:0;width:129px;height:13px;overflow:hidden"><div class="t" style="left:2px;top:4px;font-size:10.8px;color:#000"></div></div></div>
<div class="a" style="left:370px;top:255px;width:249px;height:14px;overflow:hidden;background:#ebf2fb;"><div class="a" style="left:0;top:0;width:249px;height:13px;overflow:hidden"><div class="t" style="left:2px;top:4px;font-size:10.8px;letter-spacing:0.28px;color:#000">v7#a:33:{s:8:"_version";s:2:"v7";s:10:"_view_ ...</div></div></div>
<div class="a" style="left:2px;top:284px;width:24px;height:1px;background:#e2e2e2"></div>
<div class="a" style="left:26px;top:270px;width:39px;height:14px;overflow:hidden;"><div class="a" style="left:0;top:0;width:39px;height:13px;overflow:hidden"><div class="t" style="left:3px;top:4px;font-size:10.8px;color:#000">554</div></div></div>
<div class="a" style="left:66px;top:270px;width:51px;height:14px;overflow:hidden;"><div class="a" style="left:0;top:0;width:51px;height:13px;overflow:hidden"><div class="t" style="left:2px;top:4px;font-size:10.8px;color:#000">39</div></div></div>
<div class="a" style="left:118px;top:270px;width:64px;height:14px;overflow:hidden;"><div class="a" style="left:0;top:0;width:64px;height:13px;overflow:hidden"><div class="t" style="left:2px;top:4px;font-size:10.8px;color:#000">-51</div></div></div>
<div class="a" style="left:183px;top:270px;width:56px;height:14px;overflow:hidden;"><div class="a" style="left:0;top:0;width:56px;height:13px;overflow:hidden"><div class="t" style="left:2px;top:4px;font-size:10.8px;color:#000">0</div></div></div>
<div class="a" style="left:240px;top:270px;width:129px;height:14px;overflow:hidden;"><div class="a" style="left:0;top:0;width:129px;height:13px;overflow:hidden"><div class="t" style="left:2px;top:4px;font-size:10.8px;color:#000"></div></div></div>
<div class="a" style="left:370px;top:270px;width:249px;height:14px;overflow:hidden;"><div class="a" style="left:0;top:0;width:249px;height:13px;overflow:hidden"><div class="t" style="left:2px;top:4px;font-size:10.8px;letter-spacing:0.28px;color:#000">v7#a:33:{s:8:"_version";s:2:"v7";s:10:"_view_ ...</div></div></div>
<div class="a" style="left:2px;top:299px;width:24px;height:1px;background:#e2e2e2"></div>
<div class="a" style="left:26px;top:285px;width:39px;height:14px;overflow:hidden;background:#ebf2fb;"><div class="a" style="left:0;top:0;width:39px;height:13px;overflow:hidden"><div class="t" style="left:3px;top:4px;font-size:10.8px;color:#000">300</div></div></div>
<div class="a" style="left:66px;top:285px;width:51px;height:14px;overflow:hidden;background:#ebf2fb;"><div class="a" style="left:0;top:0;width:51px;height:13px;overflow:hidden"><div class="t" style="left:2px;top:4px;font-size:10.8px;color:#000">18</div></div></div>
<div class="a" style="left:118px;top:285px;width:64px;height:14px;overflow:hidden;background:#ebf2fb;"><div class="a" style="left:0;top:0;width:64px;height:13px;overflow:hidden"><div class="t" style="left:2px;top:4px;font-size:10.8px;color:#000">-30</div></div></div>
<div class="a" style="left:183px;top:285px;width:56px;height:14px;overflow:hidden;background:#ebf2fb;"><div class="a" style="left:0;top:0;width:56px;height:13px;overflow:hidden"><div class="t" style="left:2px;top:4px;font-size:10.8px;color:#000">0</div></div></div>
<div class="a" style="left:240px;top:285px;width:129px;height:14px;overflow:hidden;background:#ebf2fb;"><div class="a" style="left:0;top:0;width:129px;height:13px;overflow:hidden"><div class="t" style="left:2px;top:4px;font-size:10.8px;color:#000"></div></div></div>
<div class="a" style="left:370px;top:285px;width:249px;height:14px;overflow:hidden;background:#ebf2fb;"><div class="a" style="left:0;top:0;width:249px;height:13px;overflow:hidden"><div class="t" style="left:2px;top:4px;font-size:10.8px;letter-spacing:0.28px;color:#000">v7#a:33:{s:8:"_version";s:2:"v7";s:10:"_view_ ...</div></div></div>
<div class="a" style="left:2px;top:314px;width:24px;height:1px;background:#e2e2e2"></div>
<div class="a" style="left:26px;top:300px;width:39px;height:14px;overflow:hidden;"><div class="a" style="left:0;top:0;width:39px;height:13px;overflow:hidden"><div class="t" style="left:3px;top:4px;font-size:10.8px;color:#000">297</div></div></div>
<div class="a" style="left:66px;top:300px;width:51px;height:14px;overflow:hidden;"><div class="a" style="left:0;top:0;width:51px;height:13px;overflow:hidden"><div class="t" style="left:2px;top:4px;font-size:10.8px;color:#000">48</div></div></div>
<div class="a" style="left:118px;top:300px;width:64px;height:14px;overflow:hidden;"><div class="a" style="left:0;top:0;width:64px;height:13px;overflow:hidden"><div class="t" style="left:2px;top:4px;font-size:10.8px;color:#000">-29</div></div></div>
<div class="a" style="left:183px;top:300px;width:56px;height:14px;overflow:hidden;"><div class="a" style="left:0;top:0;width:56px;height:13px;overflow:hidden"><div class="t" style="left:2px;top:4px;font-size:10.8px;color:#000">0</div></div></div>
<div class="a" style="left:240px;top:300px;width:129px;height:14px;overflow:hidden;"><div class="a" style="left:0;top:0;width:129px;height:13px;overflow:hidden"><div class="t" style="left:2px;top:4px;font-size:10.8px;color:#000"></div></div></div>
<div class="a" style="left:370px;top:300px;width:249px;height:14px;overflow:hidden;"><div class="a" style="left:0;top:0;width:249px;height:13px;overflow:hidden"><div class="t" style="left:2px;top:4px;font-size:10.8px;letter-spacing:0.28px;color:#000">v7#a:33:{s:8:"_version";s:2:"v7";s:10:"_view_ ...</div></div></div>
<div class="a" style="left:2px;top:329px;width:24px;height:1px;background:#e2e2e2"></div>
<div class="a" style="left:26px;top:315px;width:39px;height:14px;overflow:hidden;background:#ebf2fb;"><div class="a" style="left:0;top:0;width:39px;height:13px;overflow:hidden"><div class="t" style="left:3px;top:4px;font-size:10.8px;color:#000">298</div></div></div>
<div class="a" style="left:66px;top:315px;width:51px;height:14px;overflow:hidden;background:#ebf2fb;"><div class="a" style="left:0;top:0;width:51px;height:13px;overflow:hidden"><div class="t" style="left:2px;top:4px;font-size:10.8px;color:#000">9</div></div></div>
<div class="a" style="left:118px;top:315px;width:64px;height:14px;overflow:hidden;background:#ebf2fb;"><div class="a" style="left:0;top:0;width:64px;height:13px;overflow:hidden"><div class="t" style="left:2px;top:4px;font-size:10.8px;color:#000">-28</div></div></div>
<div class="a" style="left:183px;top:315px;width:56px;height:14px;overflow:hidden;background:#ebf2fb;"><div class="a" style="left:0;top:0;width:56px;height:13px;overflow:hidden"><div class="t" style="left:2px;top:4px;font-size:10.8px;color:#000">0</div></div></div>
<div class="a" style="left:240px;top:315px;width:129px;height:14px;overflow:hidden;background:#ebf2fb;"><div class="a" style="left:0;top:0;width:129px;height:13px;overflow:hidden"><div class="t" style="left:2px;top:4px;font-size:10.8px;color:#000"></div></div></div>
<div class="a" style="left:370px;top:315px;width:249px;height:14px;overflow:hidden;background:#ebf2fb;"><div class="a" style="left:0;top:0;width:249px;height:13px;overflow:hidden"><div class="t" style="left:2px;top:4px;font-size:10.8px;letter-spacing:0.28px;color:#000">v7#a:33:{s:8:"_version";s:2:"v7";s:10:"_view_ ...</div></div></div>
<div class="a" style="left:2px;top:344px;width:24px;height:1px;background:#e2e2e2"></div>
<div class="a" style="left:26px;top:330px;width:39px;height:14px;overflow:hidden;"><div class="a" style="left:0;top:0;width:39px;height:13px;overflow:hidden"><div class="t" style="left:3px;top:4px;font-size:10.8px;color:#000">299</div></div></div>
<div class="a" style="left:66px;top:330px;width:51px;height:14px;overflow:hidden;"><div class="a" style="left:0;top:0;width:51px;height:13px;overflow:hidden"><div class="t" style="left:2px;top:4px;font-size:10.8px;color:#000">73</div></div></div>
<div class="a" style="left:118px;top:330px;width:64px;height:14px;overflow:hidden;"><div class="a" style="left:0;top:0;width:64px;height:13px;overflow:hidden"><div class="t" style="left:2px;top:4px;font-size:10.8px;color:#000">-28</div></div></div>
<div class="a" style="left:183px;top:330px;width:56px;height:14px;overflow:hidden;"><div class="a" style="left:0;top:0;width:56px;height:13px;overflow:hidden"><div class="t" style="left:2px;top:4px;font-size:10.8px;color:#000">0</div></div></div>
<div class="a" style="left:240px;top:330px;width:129px;height:14px;overflow:hidden;"><div class="a" style="left:0;top:0;width:129px;height:13px;overflow:hidden"><div class="t" style="left:2px;top:4px;font-size:10.8px;color:#000"></div></div></div>
<div class="a" style="left:370px;top:330px;width:249px;height:14px;overflow:hidden;"><div class="a" style="left:0;top:0;width:249px;height:13px;overflow:hidden"><div class="t" style="left:2px;top:4px;font-size:10.8px;letter-spacing:0.28px;color:#000">v7#a:33:{s:8:"_version";s:2:"v7";s:10:"_view_ ...</div></div></div>
<div class="a" style="left:2px;top:359px;width:24px;height:1px;background:#e2e2e2"></div>
<div class="a" style="left:26px;top:345px;width:39px;height:14px;overflow:hidden;background:#ebf2fb;"><div class="a" style="left:0;top:0;width:39px;height:13px;overflow:hidden"><div class="t" style="left:3px;top:4px;font-size:10.8px;color:#000">340</div></div></div>
<div class="a" style="left:66px;top:345px;width:51px;height:14px;overflow:hidden;background:#ebf2fb;"><div class="a" style="left:0;top:0;width:51px;height:13px;overflow:hidden"><div class="t" style="left:2px;top:4px;font-size:10.8px;color:#000">88</div></div></div>
<div class="a" style="left:118px;top:345px;width:64px;height:14px;overflow:hidden;background:#ebf2fb;"><div class="a" style="left:0;top:0;width:64px;height:13px;overflow:hidden"><div class="t" style="left:2px;top:4px;font-size:10.8px;color:#000">-18</div></div></div>
<div class="a" style="left:183px;top:345px;width:56px;height:14px;overflow:hidden;background:#ebf2fb;"><div class="a" style="left:0;top:0;width:56px;height:13px;overflow:hidden"><div class="t" style="left:2px;top:4px;font-size:10.8px;color:#000">0</div></div></div>
<div class="a" style="left:240px;top:345px;width:129px;height:14px;overflow:hidden;background:#ebf2fb;"><div class="a" style="left:0;top:0;width:129px;height:13px;overflow:hidden"><div class="t" style="left:2px;top:4px;font-size:10.8px;color:#000"></div></div></div>
<div class="a" style="left:370px;top:345px;width:249px;height:14px;overflow:hidden;background:#ebf2fb;"><div class="a" style="left:0;top:0;width:249px;height:13px;overflow:hidden"><div class="t" style="left:2px;top:4px;font-size:10.8px;letter-spacing:0.28px;color:#000">v7#a:33:{s:8:"_version";s:2:"v7";s:10:"_view_ ...</div></div></div>
<div class="a" style="left:2px;top:374px;width:24px;height:1px;background:#e2e2e2"></div>
<div class="a" style="left:26px;top:360px;width:39px;height:14px;overflow:hidden;"><div class="a" style="left:0;top:0;width:39px;height:13px;overflow:hidden"><div class="t" style="left:3px;top:4px;font-size:10.8px;color:#000">301</div></div></div>
<div class="a" style="left:66px;top:360px;width:51px;height:14px;overflow:hidden;"><div class="a" style="left:0;top:0;width:51px;height:13px;overflow:hidden"><div class="t" style="left:2px;top:4px;font-size:10.8px;color:#000">17</div></div></div>
<div class="a" style="left:118px;top:360px;width:64px;height:14px;overflow:hidden;"><div class="a" style="left:0;top:0;width:64px;height:13px;overflow:hidden"><div class="t" style="left:2px;top:4px;font-size:10.8px;color:#000">0</div></div></div>
<div class="a" style="left:183px;top:360px;width:56px;height:14px;overflow:hidden;"><div class="a" style="left:0;top:0;width:56px;height:13px;overflow:hidden"><div class="t" style="left:2px;top:4px;font-size:10.8px;color:#000">0</div></div></div>
<div class="a" style="left:240px;top:360px;width:129px;height:14px;overflow:hidden;"><div class="a" style="left:0;top:0;width:129px;height:13px;overflow:hidden"><div class="t" style="left:2px;top:4px;font-size:10.8px;color:#000"></div></div></div>
<div class="a" style="left:370px;top:360px;width:249px;height:14px;overflow:hidden;"><div class="a" style="left:0;top:0;width:249px;height:13px;overflow:hidden"><div class="t" style="left:2px;top:4px;font-size:10.8px;letter-spacing:0.28px;color:#000">v7#a:33:{s:8:"_version";s:2:"v7";s:10:"_view_ ...</div></div></div>
<div class="a" style="left:2px;top:389px;width:24px;height:1px;background:#e2e2e2"></div>
<div class="a" style="left:26px;top:375px;width:39px;height:14px;overflow:hidden;background:#ebf2fb;"><div class="a" style="left:0;top:0;width:39px;height:13px;overflow:hidden"><div class="t" style="left:3px;top:4px;font-size:10.8px;color:#000">302</div></div></div>
<div class="a" style="left:66px;top:375px;width:51px;height:14px;overflow:hidden;background:#ebf2fb;"><div class="a" style="left:0;top:0;width:51px;height:13px;overflow:hidden"><div class="t" style="left:2px;top:4px;font-size:10.8px;color:#000">17</div></div></div>
<div class="a" style="left:118px;top:375px;width:64px;height:14px;overflow:hidden;background:#ebf2fb;"><div class="a" style="left:0;top:0;width:64px;height:13px;overflow:hidden"><div class="t" style="left:2px;top:4px;font-size:10.8px;color:#000">-29</div></div></div>
<div class="a" style="left:183px;top:375px;width:56px;height:14px;overflow:hidden;background:#ebf2fb;"><div class="a" style="left:0;top:0;width:56px;height:13px;overflow:hidden"><div class="t" style="left:2px;top:4px;font-size:10.8px;color:#000">0</div></div></div>
<div class="a" style="left:240px;top:375px;width:129px;height:14px;overflow:hidden;background:#ebf2fb;"><div class="a" style="left:0;top:0;width:129px;height:13px;overflow:hidden"><div class="t" style="left:2px;top:4px;font-size:10.8px;color:#000"></div></div></div>
<div class="a" style="left:370px;top:375px;width:249px;height:14px;overflow:hidden;background:#ebf2fb;"><div class="a" style="left:0;top:0;width:249px;height:13px;overflow:hidden"><div class="t" style="left:2px;top:4px;font-size:10.8px;letter-spacing:0.28px;color:#000">v7#a:33:{s:8:"_version";s:2:"v7";s:10:"_view_ ...</div></div></div>
<div class="a" style="left:2px;top:404px;width:24px;height:1px;background:#e2e2e2"></div>
<div class="a" style="left:26px;top:390px;width:39px;height:14px;overflow:hidden;"><div class="a" style="left:0;top:0;width:39px;height:13px;overflow:hidden"><div class="t" style="left:3px;top:4px;font-size:10.8px;color:#000">309</div></div></div>
<div class="a" style="left:66px;top:390px;width:51px;height:14px;overflow:hidden;"><div class="a" style="left:0;top:0;width:51px;height:13px;overflow:hidden"><div class="t" style="left:2px;top:4px;font-size:10.8px;color:#000">29</div></div></div>
<div class="a" style="left:118px;top:390px;width:64px;height:14px;overflow:hidden;"><div class="a" style="left:0;top:0;width:64px;height:13px;overflow:hidden"><div class="t" style="left:2px;top:4px;font-size:10.8px;color:#000">-30</div></div></div>
<div class="a" style="left:183px;top:390px;width:56px;height:14px;overflow:hidden;"><div class="a" style="left:0;top:0;width:56px;height:13px;overflow:hidden"><div class="t" style="left:2px;top:4px;font-size:10.8px;color:#000">0</div></div></div>
<div class="a" style="left:240px;top:390px;width:129px;height:14px;overflow:hidden;"><div class="a" style="left:0;top:0;width:129px;height:13px;overflow:hidden"><div class="t" style="left:2px;top:4px;font-size:10.8px;color:#000"></div></div></div>
<div class="a" style="left:370px;top:390px;width:249px;height:14px;overflow:hidden;"><div class="a" style="left:0;top:0;width:249px;height:13px;overflow:hidden"><div class="t" style="left:2px;top:4px;font-size:10.8px;letter-spacing:0.28px;color:#000">v7#a:33:{s:8:"_version";s:2:"v7";s:10:"_view_ ...</div></div></div>
<div class="a" style="left:2px;top:419px;width:24px;height:1px;background:#e2e2e2"></div>
<div class="a" style="left:26px;top:405px;width:39px;height:14px;overflow:hidden;background:#ebf2fb;"><div class="a" style="left:0;top:0;width:39px;height:13px;overflow:hidden"><div class="t" style="left:3px;top:4px;font-size:10.8px;color:#000">314</div></div></div>
<div class="a" style="left:66px;top:405px;width:51px;height:14px;overflow:hidden;background:#ebf2fb;"><div class="a" style="left:0;top:0;width:51px;height:13px;overflow:hidden"><div class="t" style="left:2px;top:4px;font-size:10.8px;color:#000">86</div></div></div>
<div class="a" style="left:118px;top:405px;width:64px;height:14px;overflow:hidden;background:#ebf2fb;"><div class="a" style="left:0;top:0;width:64px;height:13px;overflow:hidden"><div class="t" style="left:2px;top:4px;font-size:10.8px;color:#000">-19</div></div></div>
<div class="a" style="left:183px;top:405px;width:56px;height:14px;overflow:hidden;background:#ebf2fb;"><div class="a" style="left:0;top:0;width:56px;height:13px;overflow:hidden"><div class="t" style="left:2px;top:4px;font-size:10.8px;color:#000">0</div></div></div>
<div class="a" style="left:240px;top:405px;width:129px;height:14px;overflow:hidden;background:#ebf2fb;"><div class="a" style="left:0;top:0;width:129px;height:13px;overflow:hidden"><div class="t" style="left:2px;top:4px;font-size:10.8px;color:#000"></div></div></div>
<div class="a" style="left:370px;top:405px;width:249px;height:14px;overflow:hidden;background:#ebf2fb;"><div class="a" style="left:0;top:0;width:249px;height:13px;overflow:hidden"><div class="t" style="left:2px;top:4px;font-size:10.8px;letter-spacing:0.28px;color:#000">v7#a:33:{s:8:"_version";s:2:"v7";s:10:"_view_ ...</div></div></div>
<div class="a" style="left:2px;top:434px;width:24px;height:1px;background:#e2e2e2"></div>
<div class="a" style="left:26px;top:420px;width:39px;height:14px;overflow:hidden;"><div class="a" style="left:0;top:0;width:39px;height:13px;overflow:hidden"><div class="t" style="left:3px;top:4px;font-size:10.8px;color:#000">303</div></div></div>
<div class="a" style="left:66px;top:420px;width:51px;height:14px;overflow:hidden;"><div class="a" style="left:0;top:0;width:51px;height:13px;overflow:hidden"><div class="t" style="left:2px;top:4px;font-size:10.8px;color:#000">17</div></div></div>
<div class="a" style="left:118px;top:420px;width:64px;height:14px;overflow:hidden;"><div class="a" style="left:0;top:0;width:64px;height:13px;overflow:hidden"><div class="t" style="left:2px;top:4px;font-size:10.8px;color:#000">-28</div></div></div>
<div class="a" style="left:183px;top:420px;width:56px;height:14px;overflow:hidden;"><div class="a" style="left:0;top:0;width:56px;height:13px;overflow:hidden"><div class="t" style="left:2px;top:4px;font-size:10.8px;color:#000">0</div></div></div>
<div class="a" style="left:240px;top:420px;width:129px;height:14px;overflow:hidden;"><div class="a" style="left:0;top:0;width:129px;height:13px;overflow:hidden"><div class="t" style="left:2px;top:4px;font-size:10.8px;color:#000"></div></div></div>
<div class="a" style="left:370px;top:420px;width:249px;height:14px;overflow:hidden;"><div class="a" style="left:0;top:0;width:249px;height:13px;overflow:hidden"><div class="t" style="left:2px;top:4px;font-size:10.8px;letter-spacing:0.28px;color:#000">v7#a:33:{s:8:"_version";s:2:"v7";s:10:"_view_ ...</div></div></div>
</div>
<div class="a" style="left:1230px;top:356px;width:16px;height:453px;background:#f0f0f0"></div>
<div class="a" style="left:1230px;top:487px;width:15px;height:17px;background:#cbcbcb"></div>
<svg style="left:1234px;top:361px" width="8" height="6" viewBox="0 0 8 6"><path d="M0.8 5L4 1.3L7.2 5" stroke="#444" stroke-width="2.3" fill="none"/></svg>
<svg style="left:1234px;top:797px" width="8" height="6" viewBox="0 0 8 6"><path d="M0.8 1L4 4.7L7.2 1" stroke="#444" stroke-width="2.3" fill="none"/></svg>
<div class="a" style="left:1246px;top:333px;width:58px;height:476px;background:#e5e5e5"></div>
<div class="a" style="left:1246px;top:333px;width:58px;height:68px;background:#0a76d2"></div>
<svg style="left:1246px;top:363px" width="7" height="15" viewBox="0 0 7 15"><path d="M0 0L7 7.5L0 15Z" fill="#fff"/></svg>
<svg style="left:1263px;top:336px" width="27" height="28" viewBox="0 0 27 28"><rect x="0.5" y="0.5" width="26" height="27" rx="2" fill="#f4f6f8" stroke="#d0d8e0"/><rect x="3" y="4" width="21" height="21" fill="#0a4a8a"/><path d="M4.5 7.5H9.5M11.5 7.5H16M18 7.5H22.5M4.5 11.5H9.5M11.5 11.5H16M18 11.5H22.5M4.5 15.5H9.5M11.5 15.5H16M18 15.5H22.5M4.5 19.5H9.5M11.5 19.5H16M18 19.5H22.5M4.5 23H9.5M11.5 23H16M18 23H22.5" stroke="#fff" stroke-width="2"/></svg>
<div class="t" style="left:1258px;top:371px;font-size:10.6px;color:#fff;">Result</div>
<div class="t" style="left:1263px;top:381px;font-size:10.6px;color:#fff;">Grid</div>
<svg style="left:1263px;top:405px" width="27" height="28" viewBox="0 0 27 28"><rect x="0.5" y="0.5" width="25" height="27" rx="2" fill="#eeeeef" stroke="#d6d6d8"/><path d="M4 5H22M4 9H10M12 9H22M4 14H8M10 14H22M4 19H12M14 19H22" stroke="#d0d0d2" stroke-width="1.5"/></svg>
<div class="t" style="left:1262px;top:438px;font-size:10.6px;color:#707070;">Form</div>
<div class="t" style="left:1260px;top:449px;font-size:10.6px;color:#707070;">Editor</div>
<svg style="left:1263px;top:474px" width="27" height="28" viewBox="0 0 27 28"><rect x="0.5" y="0.5" width="25" height="27" rx="2" fill="#eeeeef" stroke="#d6d6d8"/><path d="M4 6H22M4 10H22M4 14H22M4 18H22M4 22H22" stroke="#d0d0d2" stroke-width="1.5"/><circle cx="19" cy="7" r="5" fill="#eeeeef" stroke="#d0d0d2" stroke-width="1.5"/><path d="M22.5 10.5L26 14" stroke="#d0d0d2" stroke-width="2"/></svg>
<div class="t" style="left:1263px;top:507px;font-size:10.6px;color:#707070;">Field</div>
<div class="t" style="left:1260px;top:518px;font-size:10.6px;color:#707070;">Types</div>
<svg style="left:1263px;top:541px" width="27" height="28" viewBox="0 0 27 28"><rect x="0.5" y="0.5" width="25" height="27" rx="2" fill="#eeeeef" stroke="#d6d6d8"/><path d="M4 6H22M4 10H22M4 14H22M4 18H22M4 22H22" stroke="#d0d0d2" stroke-width="1.5"/><circle cx="19" cy="11" r="6" fill="#eeeeef" stroke="#d0d0d2" stroke-width="1.5"/></svg>
<div class="t" style="left:1260px;top:575px;font-size:10.6px;color:#707070;">Query</div>
<div class="t" style="left:1262px;top:586px;font-size:10.6px;color:#707070;">Stats</div>
<svg style="left:1265px;top:611px" width="24" height="22" viewBox="0 0 24 22"><circle cx="4" cy="2.5" r="2" fill="none" stroke="#d0d0d2"/><rect x="1" y="7" width="6" height="4" fill="none" stroke="#d0d0d2"/><rect x="1" y="15" width="6" height="5" fill="none" stroke="#d0d0d2"/><rect x="9" y="15" width="6" height="5" fill="none" stroke="#d0d0d2"/><rect x="17" y="15" width="6" height="5" fill="none" stroke="#d0d0d2"/><path d="M4 4.5V7M4 11V15M7 17.5H9M15 17.5H17" stroke="#d0d0d2"/></svg>
<div class="t" style="left:1253px;top:643px;font-size:10.6px;color:#707070;">Execution</div>
<div class="t" style="left:1262px;top:654px;font-size:10.6px;color:#707070;">Plan</div>
<div class="a" style="left:317px;top:809px;width:95px;height:19px;background:#fff"></div>
<div class="a" style="left:412px;top:809px;width:892px;height:19px;background:#e5e5e5"></div>
<div class="t" style="left:317px;top:813px;font-size:11.4px;color:#2a72c8;">_filters_table1</div>
<svg style="left:398px;top:815px" width="8" height="8" viewBox="0 0 8 8"><path d="M0.5 0.5L7.5 7.5M7.5 0.5L0.5 7.5" stroke="#555" stroke-width="1.1"/></svg>
<div class="a" style="left:1167px;top:810px;width:64px;height:17px;background:#cdcdcf;border:1px solid #b0b0b2"></div>
<div class="t" style="left:1187px;top:813px;font-size:10.8px;color:#8a8a8a;">Apply</div>
<div class="a" style="left:1237px;top:810px;width:66px;height:17px;background:#cdcdcf;border:1px solid #b0b0b2"></div>
<div class="t" style="left:1256px;top:813px;font-size:10.8px;color:#8a8a8a;">Revert</div>
<div class="a" style="left:1308px;top:106px;width:606px;height:21px;background:#e6e6e7"></div>
<div class="t" style="left:1315px;top:111px;font-size:11.6px;color:#6e6e6e;">SQLAdditions</div>
<svg style="left:1388px;top:114px" width="521" height="5" viewBox="0 0 521 5"><rect x="0" y="0" width="521" height="5" fill="url(#dp)"/></svg>
<div class="a" style="left:1308px;top:127px;width:606px;height:27px;background:#f3f3f5"></div>
<svg style="left:1318px;top:135px" width="9" height="10" viewBox="0 0 9 10"><path d="M9 0L0 5L9 10Z" fill="#b4b4b4"/></svg>
<svg style="left:1347px;top:135px" width="9" height="10" viewBox="0 0 9 10"><path d="M0 0L9 5L0 10Z" fill="#b4b4b4"/></svg>
<div class="a" style="left:1370px;top:133px;width:1px;height:15px;background:#7a8aa0"></div>
<svg style="left:1377px;top:132px" width="18" height="19" viewBox="0 0 18 19"><rect x="0.5" y="0.5" width="16" height="17" rx="2" fill="#e8e8e8" stroke="#8a8a8a"/><path d="M3 3H7M5 3V14M3 14H7" stroke="#222" stroke-width="1.2"/><text x="8" y="13" font-size="9" font-weight="bold" fill="#222" font-family="Liberation Sans">?</text></svg>
<svg style="left:1403px;top:132px" width="18" height="19" viewBox="0 0 18 19"><path d="M4 0.5H8L5.5 4H7.5L2 9L3.5 5H1.5Z" fill="#f4c430" stroke="#9a7a10" stroke-width="0.5"/><path d="M6 7H10M8 7V17M6 17H10" stroke="#222" stroke-width="1.2"/><text x="10" y="16" font-size="9" font-weight="bold" fill="#222" font-family="Liberation Sans">?</text></svg>
<div class="a" style="left:1429px;top:133px;width:1px;height:15px;background:#7a8aa0"></div>
<div class="a" style="left:1434px;top:130px;width:121px;height:21px;background:#fff"></div>
<div class="a" style="left:1543px;top:131px;width:11px;height:19px;background:#efeff1"></div>
<svg style="left:1545px;top:138px" width="7" height="4" viewBox="0 0 7 4"><path d="M0 0H7L3.5 4Z" fill="#111"/></svg>
<div class="t" style="left:1438px;top:135px;font-size:10.6px;color:#111;">Jump to</div>
<div class="a" style="left:1308px;top:154px;width:606px;height:655px;background:#fff"></div>
<div class="t" style="left:1319px;top:167px;font-size:13.6px;color:#a6a6a6;font-weight:bold">Automatic context help is disabled. Use the toolbar to manually get help for the current</div>
<div class="t" style="left:1319px;top:183px;font-size:13.6px;color:#a6a6a6;font-weight:bold">caret position or to toggle automatic help.</div>
<div class="a" style="left:1319px;top:215px;width:582px;height:1px;background:#9a9a9a"></div>
<div class="a" style="left:1308px;top:809px;width:81px;height:19px;background:#fff"></div>
<div class="a" style="left:1389px;top:809px;width:525px;height:19px;background:#e5e5e5"></div>
<div class="t" style="left:1315px;top:813px;font-size:11.2px;color:#2a72c8;">Context Help</div>
<div class="t" style="left:1396px;top:813px;font-size:11.0px;color:#222;">Snippets</div>
<div class="a" style="left:317px;top:834px;width:1597px;height:21px;background:#e6e6e7"></div>
<div class="t" style="left:324px;top:839px;font-size:11.6px;color:#6e6e6e;">Output</div>
<svg style="left:363px;top:842px" width="1546" height="5" viewBox="0 0 1546 5"><rect x="0" y="0" width="1546" height="5" fill="url(#dp)"/></svg>
<div class="a" style="left:317px;top:855px;width:1597px;height:27px;background:#f3f3f5"></div>
<svg style="left:324px;top:862px" width="15" height="16" viewBox="0 0 15 16"><rect x="0.5" y="4.5" width="10" height="11" fill="#fff" stroke="#333"/><path d="M3 2.5H12.5V12M5.5 0.5H14.5V10" stroke="#333" fill="none"/></svg>
<div class="a" style="left:345px;top:859px;width:150px;height:21px;background:#fff"></div>
<div class="a" style="left:483px;top:860px;width:11px;height:19px;background:#efeff1"></div>
<svg style="left:485px;top:867px" width="7" height="4" viewBox="0 0 7 4"><path d="M0 0H7L3.5 4Z" fill="#111"/></svg>
<div class="t" style="left:349px;top:864px;font-size:10.6px;color:#111;">Action Output</div>
<div class="a" style="left:317px;top:882px;width:1597px;height:151px;background:#fff"></div>
<div class="a" style="left:338px;top:883px;width:1px;height:17px;background:#dadada"></div>
<div class="a" style="left:374px;top:883px;width:1px;height:17px;background:#dadada"></div>
<div class="a" style="left:425px;top:883px;width:1px;height:17px;background:#dadada"></div>
<div class="a" style="left:1109px;top:883px;width:1px;height:17px;background:#dadada"></div>
<div class="a" style="left:1794px;top:883px;width:1px;height:17px;background:#dadada"></div>
<div class="a" style="left:1912px;top:883px;width:1px;height:17px;background:#dadada"></div>
<div class="t" style="left:345px;top:887px;font-size:9.8px;color:#222;">#</div>
<div class="t" style="left:381px;top:887px;font-size:9.8px;color:#222;">Time</div>
<div class="t" style="left:431px;top:887px;font-size:9.8px;color:#222;">Action</div>
<div class="t" style="left:1116px;top:887px;font-size:9.8px;color:#222;">Message</div>
<div class="t" style="left:1801px;top:887px;font-size:9.8px;color:#222;">Duration / Fetch</div>
<svg style="left:321px;top:905px" width="12" height="12" viewBox="0 0 12 12"><circle cx="6" cy="6" r="5.8" fill="#149a2c"/><circle cx="6" cy="6" r="4.8" fill="#1fae3a"/><path d="M3.2 6.2L5.3 8.2L9 4.2" stroke="#fff" stroke-width="1.8" fill="none"/></svg>
<div class="t" style="left:339px;width:30px;text-align:right;top:905px;font-size:10.8px">1</div>
<div class="t" style="left:379px;top:905px;font-size:10.8px;color:#111;">11:28:23</div>
<div class="t" style="left:429px;top:905px;font-size:10.6px;color:#111;">SELECT * FROM bugtracker1.mantis_filters_table LIMIT 0, 1000</div>
<div class="t" style="left:1113px;top:906px;font-size:10.4px;color:#111;">1000 row(s) returned</div>
<div class="t" style="left:1798px;top:905px;font-size:10.9px;color:#111;">0.641 sec / 13.765 sec</div>
<div class="a" style="left:318px;top:923px;width:20px;height:21px;background:#ebf2fb"></div>
<div class="a" style="left:339px;top:923px;width:35px;height:21px;background:#ebf2fb"></div>
<div class="a" style="left:375px;top:923px;width:50px;height:21px;background:#ebf2fb"></div>
<div class="a" style="left:426px;top:923px;width:683px;height:21px;background:#ebf2fb"></div>
<div class="a" style="left:1110px;top:923px;width:684px;height:21px;background:#ebf2fb"></div>
<div class="a" style="left:1795px;top:923px;width:118px;height:21px;background:#ebf2fb"></div>
<svg style="left:321px;top:927px" width="12" height="12" viewBox="0 0 12 12"><circle cx="6" cy="6" r="5.8" fill="#149a2c"/><circle cx="6" cy="6" r="4.8" fill="#1fae3a"/><path d="M3.2 6.2L5.3 8.2L9 4.2" stroke="#fff" stroke-width="1.8" fill="none"/></svg>
<div class="t" style="left:339px;width:30px;text-align:right;top:927px;font-size:10.8px">2</div>
<div class="t" style="left:379px;top:927px;font-size:10.8px;color:#111;">11:29:22</div>
<div class="t" style="left:429px;top:927px;font-size:10.6px;color:#111;">SELECT * FROM bugtracker1.mantis_config_table LIMIT 0, 1000</div>
<div class="t" style="left:1113px;top:928px;font-size:10.4px;color:#111;">44 row(s) returned</div>
<div class="t" style="left:1798px;top:927px;font-size:10.9px;color:#111;">0.563 sec / 0.000 sec</div>
<svg style="left:321px;top:949px" width="12" height="12" viewBox="0 0 12 12"><circle cx="6" cy="6" r="5.8" fill="#149a2c"/><circle cx="6" cy="6" r="4.8" fill="#1fae3a"/><path d="M3.2 6.2L5.3 8.2L9 4.2" stroke="#fff" stroke-width="1.8" fill="none"/></svg>
<div class="t" style="left:339px;width:30px;text-align:right;top:949px;font-size:10.8px">3</div>
<div class="t" style="left:379px;top:949px;font-size:10.8px;color:#111;">11:55:23</div>
<div class="t" style="left:429px;top:949px;font-size:10.6px;color:#111;">SELECT * FROM bugtracker2.mantis_config_table LIMIT 0, 1000</div>
<div class="t" style="left:1113px;top:950px;font-size:10.4px;color:#111;">1000 row(s) returned</div>
<div class="t" style="left:1798px;top:949px;font-size:10.9px;color:#111;">0.156 sec / 0.219 sec</div>
<div class="a" style="left:318px;top:967px;width:20px;height:21px;background:#ebf2fb"></div>
<div class="a" style="left:339px;top:967px;width:35px;height:21px;background:#ebf2fb"></div>
<div class="a" style="left:375px;top:967px;width:50px;height:21px;background:#ebf2fb"></div>
<div class="a" style="left:426px;top:967px;width:683px;height:21px;background:#ebf2fb"></div>
<div class="a" style="left:1110px;top:967px;width:684px;height:21px;background:#ebf2fb"></div>
<div class="a" style="left:1795px;top:967px;width:118px;height:21px;background:#ebf2fb"></div>
<svg style="left:321px;top:971px" width="12" height="12" viewBox="0 0 12 12"><circle cx="6" cy="6" r="5.8" fill="#149a2c"/><circle cx="6" cy="6" r="4.8" fill="#1fae3a"/><path d="M3.2 6.2L5.3 8.2L9 4.2" stroke="#fff" stroke-width="1.8" fill="none"/></svg>
<div class="t" style="left:339px;width:30px;text-align:right;top:971px;font-size:10.8px">4</div>
<div class="t" style="left:379px;top:971px;font-size:10.8px;color:#111;">15:37:36</div>
<div class="t" style="left:429px;top:971px;font-size:10.6px;color:#111;">SELECT * FROM bugtracker2.mantis_config_table LIMIT 0, 1000</div>
<div class="t" style="left:1113px;top:972px;font-size:10.4px;color:#111;">1000 row(s) returned</div>
<div class="t" style="left:1798px;top:971px;font-size:10.9px;color:#111;">0.203 sec / 0.859 sec</div>
<svg style="left:321px;top:993px" width="12" height="12" viewBox="0 0 12 12"><circle cx="6" cy="6" r="5.8" fill="#149a2c"/><circle cx="6" cy="6" r="4.8" fill="#1fae3a"/><path d="M3.2 6.2L5.3 8.2L9 4.2" stroke="#fff" stroke-width="1.8" fill="none"/></svg>
<div class="t" style="left:339px;width:30px;text-align:right;top:993px;font-size:10.8px">5</div>
<div class="t" style="left:379px;top:993px;font-size:10.8px;color:#111;">15:38:00</div>
<div class="t" style="left:429px;top:993px;font-size:10.6px;color:#111;">Apply changes to mantis_config_table</div>
<div class="t" style="left:1113px;top:994px;font-size:10.4px;color:#111;">Changes applied</div>
<div class="t" style="left:1798px;top:993px;font-size:10.9px;color:#111;"></div>
<div class="a" style="left:318px;top:1011px;width:20px;height:21px;background:#ebf2fb"></div>
<div class="a" style="left:339px;top:1011px;width:35px;height:21px;background:#ebf2fb"></div>
<div class="a" style="left:375px;top:1011px;width:50px;height:21px;background:#ebf2fb"></div>
<div class="a" style="left:426px;top:1011px;width:683px;height:21px;background:#ebf2fb"></div>
<div class="a" style="left:1110px;top:1011px;width:684px;height:21px;background:#ebf2fb"></div>
<div class="a" style="left:1795px;top:1011px;width:118px;height:21px;background:#ebf2fb"></div>
<svg style="left:321px;top:1015px" width="12" height="12" viewBox="0 0 12 12"><circle cx="6" cy="6" r="5.8" fill="#149a2c"/><circle cx="6" cy="6" r="4.8" fill="#1fae3a"/><path d="M3.2 6.2L5.3 8.2L9 4.2" stroke="#fff" stroke-width="1.8" fill="none"/></svg>
<div class="t" style="left:339px;width:30px;text-align:right;top:1015px;font-size:10.8px">6</div>
<div class="t" style="left:379px;top:1015px;font-size:10.8px;color:#111;">15:42:10</div>
<div class="t" style="left:429px;top:1015px;font-size:10.6px;color:#111;">SELECT * FROM bugtracker2.mantis_filters_table LIMIT 0, 1000</div>
<div class="t" style="left:1113px;top:1016px;font-size:10.4px;color:#111;">1000 row(s) returned</div>
<div class="t" style="left:1798px;top:1015px;font-size:10.9px;color:#111;">0.219 sec / 5.266 sec</div>
<div class="a" style="left:0px;top:1040px;width:1920px;height:40px;background:linear-gradient(to right,#1f323b,#1d2c3a 50%,#1c2639)"></div>
<svg style="left:16px;top:1052px" width="17" height="17" viewBox="0 0 17 17"><path d="M0 2.3L7 1.3V8H0ZM8 1.1L17 0V8H8ZM0 9H7V15.7L0 14.7ZM8 9H17V17L8 15.9Z" fill="#fff"/></svg>
<div class="a" style="left:48px;top:1040px;width:344px;height:40px;background:#f0f0f0;border-top:1px solid #c8c8c8"></div>
<svg style="left:60px;top:1052px" width="17" height="17" viewBox="0 0 17 17"><circle cx="10.5" cy="6.5" r="5.5" fill="none" stroke="#222" stroke-width="1.4"/><path d="M6.5 10.5L1 16" stroke="#222" stroke-width="1.6"/></svg>
<div class="t" style="left:88px;top:1053px;font-size:14.4px;color:#2a2a2a;">Type here to search</div>
<svg style="left:404px;top:1048px" width="24" height="24" viewBox="0 0 24 24"><rect x="3.5" y="5.5" width="13" height="11" fill="none" stroke="#fff" stroke-width="1.4"/><path d="M2 3.5H18M2 18.5H18" stroke="#fff" stroke-width="1.4"/><path d="M20 5V19" stroke="#fff" stroke-width="1.4"/><rect x="19" y="7" width="2" height="3" fill="#fff"/></svg>
<svg style="left:455px;top:1048px" width="24" height="24" viewBox="0 0 24 24"><circle cx="12" cy="12" r="11" fill="#1e90e0"/><path d="M1 12A11 11 0 0 1 23 11Q23 16 17 16Q12 16 13 12Q13 8 8 9Q3 10 1 14Z" fill="#3ad07a"/><path d="M6 14Q6 19 12 20Q17 20 19 18Q13 22 8 19Q4 16 6 14Z" fill="#0a4ea8"/></svg>
<div class="a" style="left:447px;top:1078px;width:40px;height:2px;background:#76b9ed"></div>
<svg style="left:503px;top:1048px" width="24" height="24" viewBox="0 0 24 24"><path d="M1 4H9L11 6H23V20H1Z" fill="#f8c74a"/><rect x="1" y="3" width="9" height="3" fill="#e8a420"/><path d="M7 21V13H17V21H14V16H10V21Z" fill="#3f8ee0"/></svg>
<div class="a" style="left:495px;top:1078px;width:40px;height:2px;background:#76b9ed"></div>
<svg style="left:552px;top:1048px" width="24" height="24" viewBox="0 0 24 24"><path d="M4 5L15 1L20 3V21L15 23L4 19L15 20V4.5L8 7V17L4 19Z" fill="#e54a1a"/></svg>
<div class="a" style="left:544px;top:1078px;width:40px;height:2px;background:#76b9ed"></div>
<svg style="left:601px;top:1048px" width="24" height="24" viewBox="0 0 24 24"><rect x="8" y="2" width="15" height="20" fill="#1c78d8"/><rect x="12" y="2" width="11" height="8" fill="#49b0f2"/><path d="M8 12L15.5 17L23 12V22H8Z" fill="#1090e0"/><rect x="1" y="6" width="12" height="12" rx="1" fill="#0a64c0"/><circle cx="7" cy="12" r="3.3" fill="none" stroke="#fff" stroke-width="1.8"/></svg>
<div class="a" style="left:593px;top:1078px;width:40px;height:2px;background:#76b9ed"></div>
<svg style="left:650px;top:1048px" width="24" height="24" viewBox="0 0 24 24"><circle cx="13" cy="4" r="3" fill="#7b83eb"/><circle cx="20" cy="6" r="2.4" fill="#5059c9"/><rect x="9" y="8" width="14" height="11" rx="3" fill="#7b83eb"/><rect x="1" y="6" width="12" height="12" rx="1" fill="#4b53bc"/><path d="M4 9H10M7 9V16" stroke="#fff" stroke-width="2"/><circle cx="19" cy="19" r="4.5" fill="#6bb52a" stroke="#fff" stroke-width="1"/><path d="M16.8 19L18.5 20.5L21.3 17.5" stroke="#fff" stroke-width="1.4" fill="none"/></svg>
<div class="a" style="left:642px;top:1078px;width:40px;height:2px;background:#76b9ed"></div>
<svg style="left:699px;top:1048px" width="24" height="24" viewBox="0 0 24 24"><circle cx="12" cy="12" r="11" fill="#dd4b3e"/><path d="M12 12L21.5 6.5A11 11 0 0 1 12 23Z" fill="#f7c52e"/><path d="M12 12L12 23A11 11 0 0 1 2.5 6.5Z" fill="#1ea454"/><circle cx="12" cy="12" r="5" fill="#fff"/><circle cx="12" cy="12" r="4" fill="#4a8af4"/></svg>
<div class="a" style="left:691px;top:1078px;width:40px;height:2px;background:#76b9ed"></div>
<svg style="left:748px;top:1048px" width="24" height="24" viewBox="0 0 24 24"><rect x="4" y="1" width="16" height="22" fill="#fff"/><rect x="6" y="3" width="12" height="4" fill="#1e2d36"/><path d="M6.5 10H8.5M10.5 10H12.5M14.5 10H16.5M6.5 14H8.5M10.5 14H12.5M14.5 14H16.5M6.5 18H8.5M10.5 18H12.5M14.5 18H16.5" stroke="#1e2d36" stroke-width="2"/></svg>
<svg style="left:797px;top:1048px" width="24" height="24" viewBox="0 0 24 24"><ellipse cx="11" cy="9" rx="10" ry="6" transform="rotate(-20 11 9)" fill="#f2f2f2" stroke="#d03030" stroke-width="1.5"/><path d="M3 13Q8 17 18 12" stroke="#888" stroke-width="2" fill="none"/><circle cx="15" cy="17" r="3" fill="none" stroke="#2a9ae0" stroke-width="1.6"/><circle cx="20" cy="15" r="3" fill="none" stroke="#2a9ae0" stroke-width="1.6"/></svg>
<div class="a" style="left:789px;top:1078px;width:40px;height:2px;background:#76b9ed"></div>
<svg style="left:846px;top:1048px" width="24" height="24" viewBox="0 0 24 24"><rect x="1" y="1" width="22" height="22" rx="3" fill="#470137"/><text x="3.5" y="17" font-size="12" font-weight="bold" fill="#ff61f6" font-family="Liberation Sans">Xd</text></svg>
<div class="a" style="left:838px;top:1078px;width:40px;height:2px;background:#76b9ed"></div>
<svg style="left:895px;top:1048px" width="24" height="24" viewBox="0 0 24 24"><path d="M5 4Q5 1 10 1Q15 1 15 4V17Q15 20 10 20Q5 20 5 17Z" fill="#f4c64a"/><ellipse cx="10" cy="4" rx="5" ry="2.5" fill="#ffe08a"/><path d="M1 14V22H6M23 7V1H17M23 17V22H18M1 7V1H6" stroke="#3aa04a" stroke-width="1.5" fill="none"/><path d="M13 21L21 11M15 11L21 20" stroke="#1a6ad0" stroke-width="2"/></svg>
<div class="a" style="left:887px;top:1078px;width:40px;height:2px;background:#76b9ed"></div>
<svg style="left:944px;top:1048px" width="24" height="24" viewBox="0 0 24 24"><rect x="1" y="1" width="8" height="8" fill="#2a80e0"/><rect x="6" y="9" width="12" height="11" rx="1" fill="#777"/><path d="M8 9V6Q12 2 16 6V9" stroke="#999" stroke-width="2" fill="none"/><path d="M16 15L23 22M23 16V22H17" stroke="#2ab040" stroke-width="3" fill="none"/></svg>
<div class="a" style="left:936px;top:1078px;width:40px;height:2px;background:#76b9ed"></div>
<div class="a" style="left:981px;top:1040px;width:50px;height:40px;background:#3b4955"></div>
<svg style="left:994px;top:1048px" width="24" height="24" viewBox="0 0 24 24"><rect x="0" y="0" width="24" height="24" rx="3" fill="#25608f"/><path d="M4 6Q12 3 16 10Q18 14 17 20M6 8Q9 13 12 19" stroke="#d8e8f4" stroke-width="1.1" fill="none"/><path d="M17 2L20 5M19 2L17 5" stroke="#fff" stroke-width="1.2"/></svg>
<div class="a" style="left:983px;top:1078px;width:46px;height:2px;background:#76b9ed"></div>
<svg style="left:1043px;top:1048px" width="24" height="24" viewBox="0 0 24 24"><rect x="9" y="2" width="14" height="20" fill="#ca64ea"/><rect x="14" y="2" width="9" height="20" fill="#ae4bd5"/><rect x="1" y="6" width="12" height="12" rx="1" fill="#7719aa"/><path d="M4 15V9L10 15V9" stroke="#fff" stroke-width="1.8" fill="none"/></svg>
<div class="a" style="left:1035px;top:1078px;width:40px;height:2px;background:#76b9ed"></div>
<svg style="left:1092px;top:1048px" width="24" height="24" viewBox="0 0 24 24"><rect x="8" y="2" width="15" height="20" fill="#41a5ee"/><rect x="8" y="12" width="15" height="10" fill="#185abd"/><rect x="1" y="6" width="12" height="12" rx="1" fill="#185abd"/><path d="M3 9L5 15L7 10L9 15L11 9" stroke="#fff" stroke-width="1.4" fill="none"/></svg>
<div class="a" style="left:1084px;top:1078px;width:40px;height:2px;background:#76b9ed"></div>
<svg style="left:1141px;top:1048px" width="24" height="24" viewBox="0 0 24 24"><rect x="12" y="1" width="10" height="8" fill="#3a6ad0" stroke="#eee"/><rect x="2" y="13" width="10" height="8" fill="#3a6ad0" stroke="#eee"/><path d="M14 9L10 13H13L9 17" stroke="#f4e020" stroke-width="2" fill="none"/><rect x="1" y="21" width="12" height="2" fill="#ddd"/></svg>
<div class="a" style="left:1133px;top:1078px;width:40px;height:2px;background:#76b9ed"></div>
<svg style="left:1190px;top:1048px" width="24" height="24" viewBox="0 0 24 24"><rect x="13" y="1" width="7" height="22" rx="1" fill="#f2c811"/><rect x="8" y="7" width="7" height="16" rx="1" fill="#e8b000"/><rect x="4" y="13" width="6" height="10" rx="1" fill="#d8a000"/></svg>
<div class="a" style="left:1182px;top:1078px;width:40px;height:2px;background:#76b9ed"></div>
<svg style="left:1239px;top:1048px" width="24" height="24" viewBox="0 0 24 24"><rect x="8" y="2" width="15" height="20" fill="#21a366"/><rect x="15" y="2" width="8" height="10" fill="#33c481"/><rect x="8" y="12" width="15" height="10" fill="#107c41"/><rect x="1" y="6" width="12" height="12" rx="1" fill="#107c41"/><path d="M4 9L10 15M10 9L4 15" stroke="#fff" stroke-width="1.8"/></svg>
<div class="a" style="left:1231px;top:1078px;width:40px;height:2px;background:#76b9ed"></div>
<svg style="left:1288px;top:1048px" width="24" height="24" viewBox="0 0 24 24"><ellipse cx="10" cy="14" rx="9" ry="7" fill="#e8eef2"/><circle cx="6" cy="12" r="1.8" fill="#e04040"/><circle cx="10" cy="9.5" r="1.8" fill="#3080e0"/><circle cx="6" cy="16.5" r="1.8" fill="#40b040"/><path d="M13 18L22 3" stroke="#d89a30" stroke-width="2.5"/></svg>
<div class="a" style="left:1280px;top:1078px;width:40px;height:2px;background:#76b9ed"></div>
<svg style="left:1543px;top:1050px" width="22" height="18" viewBox="0 0 22 18"><circle cx="9" cy="8" r="6" fill="#f8c020"/><path d="M3 17Q0 17 0 14Q0 11 4 11Q5 7 10 8Q14 8 15 12Q19 12 19 15Q19 17 16 17Z" fill="#dfe8f2"/></svg>
<div class="t" style="left:1573px;top:1053px;font-size:13.2px;color:#fff;">30°C&nbsp; AQI 75</div>
<svg style="left:1673px;top:1055px" width="14" height="8" viewBox="0 0 14 8"><path d="M1 7L7 1L13 7" stroke="#fff" stroke-width="1.3" fill="none"/></svg>
<svg style="left:1703px;top:1052px" width="18" height="18" viewBox="0 0 18 18"><path d="M2 12Q0 12 0 9.5Q0 7 3 7Q4 3 8 3Q12 3 13 7Q16 7 16 10Q16 12 14 12Z" fill="#2a7ad8"/><circle cx="13" cy="13" r="4.5" fill="#e02a2a"/><path d="M11 11L15 15M15 11L11 15" stroke="#fff" stroke-width="1.3"/></svg>
<svg style="left:1738px;top:1055px" width="16" height="9" viewBox="0 0 16 9"><rect x="0.5" y="0.5" width="13" height="8" fill="none" stroke="#fff"/><rect x="2" y="2" width="3" height="5" fill="#fff"/><rect x="14" y="3" width="2" height="3" fill="#fff"/></svg>
<div class="t" style="left:1767px;top:1053px;font-size:11.8px;color:#fff;">ENG</div>
<div class="t" style="left:1818px;top:1045px;font-size:11.8px;color:#fff;">15:44</div>
<div class="t" style="left:1804px;top:1062px;font-size:11.6px;color:#fff;">13-07-2021</div>
<svg style="left:1879px;top:1052px" width="18" height="17" viewBox="0 0 18 17"><path d="M0.5 0.5H17.5V12.5H10L7 15.5V12.5H0.5Z" fill="none" stroke="#fff" stroke-width="1.1"/></svg>
<div class="a" style="left:1915px;top:1040px;width:1px;height:40px;background:#4a5568"></div></body></html>
